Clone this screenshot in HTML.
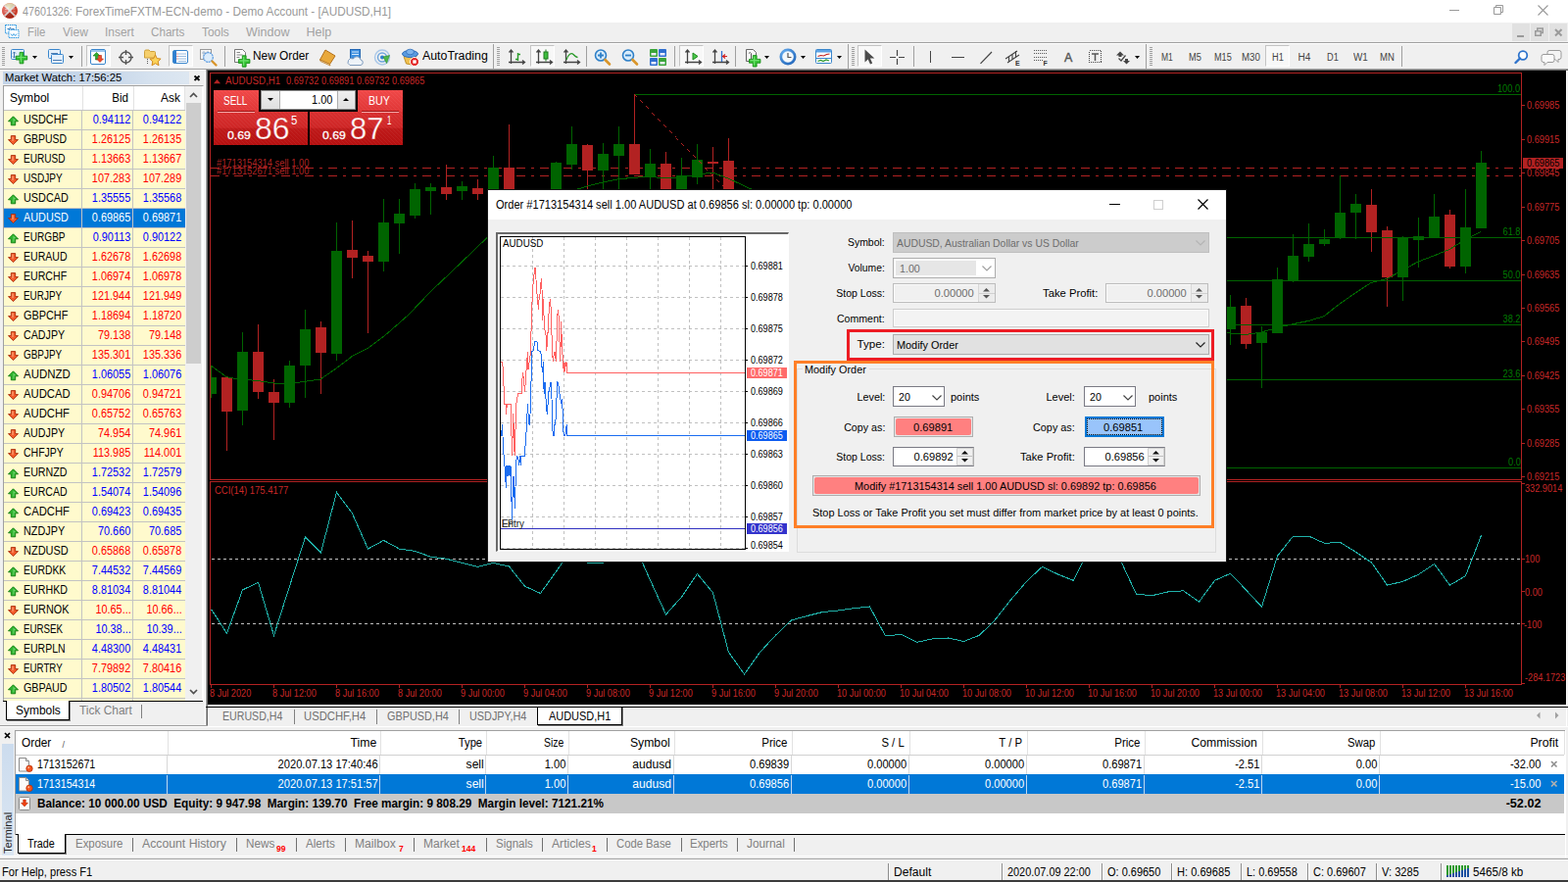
<!DOCTYPE html>
<html lang="en">
<head>
<meta charset="utf-8">
<title>47601326: ForexTimeFXTM-ECN-demo - Demo Account - [AUDUSD,H1]</title>
<style>
html,body{margin:0;padding:0}
body{width:1600px;height:900px;overflow:hidden;position:relative;background:#f0f0f0;font-family:"Liberation Sans",sans-serif;font-size:12px;color:#000}
.b{position:absolute;display:block}
.t{position:absolute;display:block;white-space:pre;line-height:20px;transform-origin:0 50%}
.tr{transform-origin:100% 50%}
.tc{transform-origin:50% 50%}
.sf{font-family:"Liberation Serif",serif}
section{position:absolute;left:0;top:0;width:0;height:0}
</style>
</head>
<body>
<section id="titlebar">
<div class="b" style="left:0px;top:0px;width:1600px;height:23px;background:#fff;"></div>
<svg class="b" style="left:2px;top:3px" width="16" height="16" viewBox="0 0 16 16"><defs><clipPath id="ci"><circle cx="8" cy="8" r="7.800"/></clipPath><radialGradient id="gi" cx=".4" cy=".3" r=".8"><stop offset="0" stop-color="#fff" stop-opacity=".35"/><stop offset="1" stop-color="#000" stop-opacity=".12"/></radialGradient></defs><g clip-path="url(#ci)"><rect width="16" height="16" fill="#ef4a32"/><path d="M8 8L0 0v16z" fill="#f4564a"/><path d="M8 8L16 0v16z" fill="#e63c26"/><path d="M8 8L0 16h16z" fill="#b8200e"/><path d="M8 8L1 0h14z" fill="#ecdfae"/><path d="M0 0l16 16M16 0L0 16" stroke="#f1eeee" stroke-width="1.600"/><path d="M3 6.500h2M2.500 9h2.500M11 6h2.500M11.500 9h2" stroke="#ffc0b8" stroke-width=".8"/><rect width="16" height="16" fill="url(#gi)"/></g></svg>
<span class="t" style="top:2px;font-size:12.5px;color:#999;left:22.7px;transform:scaleX(0.860);">47601326:</span>
<span class="t" style="top:2px;font-size:12.5px;color:#999;left:77px;transform:scaleX(0.942);">ForexTimeFXTM-ECN-demo - Demo Account - [AUDUSD,H1]</span>
<div class="b" style="left:1479px;top:10px;width:10px;height:1px;background:#999;"></div>
<svg class="b" style="left:1524px;top:5px" width="10" height="10" viewBox="0 0 10 10"><path d="M.5 2.5h7v7h-7zM2.5 2.5v-2h7v7h-2" fill="none" stroke="#999" stroke-width="1"/></svg>
<svg class="b" style="left:1569px;top:5px" width="11" height="11" viewBox="0 0 11 11"><path d="M.5 .5l10 10M10.500 .5l-10 10" fill="none" stroke="#999" stroke-width="1.1"/></svg>
</section>
<section id="menubar">
<div class="b" style="left:0px;top:23px;width:1600px;height:20px;background:#f0f0f0;"></div>
<svg class="b" style="left:5px;top:25px" width="15" height="15" viewBox="0 0 15 15"><rect x=".5" y=".5" width="11" height="8.500" fill="#f4f9fd" stroke="#2a96e0" stroke-width="1" stroke-dasharray="1.500 .7"/><path d="M2.500 4.500h2l1-1.500 1 2.500 1-1h2" fill="none" stroke="#2a6fb0" stroke-width=".9"/><rect x="4" y="5.500" width="10" height="8" fill="#fff" stroke="#2a96e0" stroke-dasharray="1.500 .7"/><path d="M6 9.500l1.500 2 1.500-2 1.500 2 1.500-2" fill="none" stroke="#2a96e0" stroke-width=".9"/></svg>
<span class="t" style="top:23px;font-size:12.5px;color:#a2a2a2;left:28px;transform:scaleX(0.909);">File</span>
<span class="t" style="top:23px;font-size:12.5px;color:#a2a2a2;left:63.5px;transform:scaleX(0.960);">View</span>
<span class="t" style="top:23px;font-size:12.5px;color:#a2a2a2;left:106.5px;transform:scaleX(0.953);">Insert</span>
<span class="t" style="top:23px;font-size:12.5px;color:#a2a2a2;left:154px;transform:scaleX(0.932);">Charts</span>
<span class="t" style="top:23px;font-size:12.5px;color:#a2a2a2;left:205.5px;transform:scaleX(0.953);">Tools</span>
<span class="t" style="top:23px;font-size:12.5px;color:#a2a2a2;left:251px;">Window</span>
<span class="t" style="top:23px;font-size:12.5px;color:#a2a2a2;left:312.5px;">Help</span>
<div class="b" style="left:1543px;top:24px;width:18px;height:18px;background:#e1e1e1;"></div>
<div class="b" style="left:1562px;top:24px;width:18px;height:18px;background:#e1e1e1;"></div>
<div class="b" style="left:1581px;top:24px;width:18px;height:18px;background:#e1e1e1;"></div>
<div class="b" style="left:1548px;top:36px;width:7px;height:2px;background:#9a9a9a;"></div>
<svg class="b" style="left:1566px;top:28px" width="10" height="10" viewBox="0 0 10 10"><path d="M.75 3.750h5.500v4.500h-5.500zM2.750 3.500v-2.500h5.500v4.500h-2" fill="none" stroke="#9a9a9a" stroke-width="1.500"/></svg>
<svg class="b" style="left:1586px;top:29px" width="9" height="9" viewBox="0 0 9 9"><path d="M1 1l6.500 6.500M7.500 1l-6.500 6.500" fill="none" stroke="#9a9a9a" stroke-width="2"/></svg>
</section>
<section id="toolbar">
<div class="b" style="left:0px;top:43px;width:1600px;height:1px;background:#a0a0a0;"></div>
<div class="b" style="left:0px;top:44px;width:1600px;height:1px;background:#fff;"></div>
<div class="b" style="left:0px;top:45px;width:1600px;height:25px;background:#f0f0f0;"></div>
<div class="b" style="left:0px;top:70px;width:1600px;height:1px;background:#a0a0a0;"></div>
<div class="b" style="left:0px;top:71px;width:210px;height:1px;background:#fff;"></div>
<div class="b" style="left:210px;top:71px;width:1px;height:1px;background:#a0a0a0;"></div>
<div class="b" style="left:211px;top:71px;width:1389px;height:1px;background:#696969;"></div>
<div class="b" style="left:0px;top:72px;width:212px;height:1px;background:#f0f0f0;"></div>
<div class="b" style="left:2px;top:48px;width:3px;height:20px;background:repeating-linear-gradient(#a0a0a0 0 1px,transparent 1px 2px);"></div>
<svg class="b" style="left:10px;top:49px" width="20" height="20" viewBox="0 0 20 20"><rect x="1.500" y="1.500" width="13" height="10" rx="1" fill="#e4f0fb" stroke="#3a86cc"/><path d="M4.500 4v6M3 5.500l1.500-1.500 1.500 1.500M3 8.500l1.500 1.500 1.500-1.500" fill="none" stroke="#3a6ea8" stroke-width=".9"/><path d="M6.3 8.2h3.800v-3.800h3.800v3.800h3.800v3.800h-3.800v3.800h-3.800v-3.800h-3.800z" fill="#35c435" stroke="#189018" stroke-width=".9"/><path d="M7.5 9.5h9M11.4 5.6v9" stroke="#7be87b" stroke-width="1.200" opacity=".8"/></svg>
<svg class="b" style="left:33px;top:57px" width="5" height="3" viewBox="0 0 5 3"><path d="M0 0h5L2.500 3z" fill="#000"/></svg>
<svg class="b" style="left:48px;top:49px" width="20" height="20" viewBox="0 0 20 20"><rect x="1.500" y="1.500" width="12" height="9" rx="1" fill="#e4f0fb" stroke="#3a86cc"/><rect x="4.500" y="6.500" width="12" height="9" rx="1" fill="#e4f0fb" stroke="#3a86cc"/><path d="M4 5.500h7M6 12.500h9" stroke="#3a6ea8" stroke-width=".9"/></svg>
<svg class="b" style="left:70px;top:57px" width="5" height="3" viewBox="0 0 5 3"><path d="M0 0h5L2.500 3z" fill="#000"/></svg>
<div class="b" style="left:83px;top:47px;width:1px;height:21px;background:#a0a0a0;"></div>
<div class="b" style="left:88px;top:46px;width:25px;height:22px;background:#f8f8f8;border:1px solid #c4c4c4;border-right-color:#fff;border-bottom-color:#fff;box-sizing:border-box;"></div>
<svg class="b" style="left:92px;top:50px" width="16" height="16" viewBox="0 0 16 16"><rect x=".5" y=".5" width="15" height="15" rx="1.500" fill="#fff" stroke="#3a86cc"/><rect x="1" y="1" width="14" height="2" fill="#9cc6ee"/><path d="M5.500 11v-4h-2.500l3.500-3.500 3.500 3.500h-2.500v4z" fill="#2fae2f" stroke="#137a13" stroke-width=".6"/><path d="M8.500 6.500h3v3.500h2l-3.500 3.500-3.500-3.500h2z" fill="#f04a2a" stroke="#b0240c" stroke-width=".6"/></svg>
<svg class="b" style="left:119px;top:49px" width="19" height="19" viewBox="0 0 19 19"><circle cx="9.500" cy="9.500" r="5.500" fill="none" stroke="#555" stroke-width="1.400"/><path d="M9.500 2v5M9.500 12v5M2 9.500h5M12 9.500h5" stroke="#555" stroke-width="1.400"/></svg>
<svg class="b" style="left:147px;top:49px" width="19" height="19" viewBox="0 0 19 19"><path d="M.5 3.500q0-1.500 1.500-1.500h3l1.500 1.500h4q1 0 1 1v5.500h-11z" fill="#f6cf6c" stroke="#c99a2e" stroke-width=".9"/><path d="M3.500 11v6" stroke="#555" stroke-dasharray="1 1"/><path d="M11.500 7l1.700 3.600 3.900.5-2.900 2.700.8 3.900-3.500-2-3.500 2 .8-3.900-2.900-2.700 3.900-.5z" fill="#fbd35a" stroke="#d28a1c" stroke-width="1"/></svg>
<div class="b" style="left:172px;top:46px;width:25px;height:22px;background:#f8f8f8;border:1px solid #c4c4c4;border-right-color:#fff;border-bottom-color:#fff;box-sizing:border-box;"></div>
<svg class="b" style="left:176px;top:50px" width="16" height="16" viewBox="0 0 16 16"><rect x=".5" y="1.500" width="15" height="13" rx="1.500" fill="#fff" stroke="#3a86cc"/><rect x="1" y="2" width="3" height="12" fill="#2f7fd0"/><path d="M6 5h8M6 7.500h8M6 10h8M6 12.500h8" stroke="#8db4dc" stroke-width=".9"/><path d="M4.500 5h1M4.500 7.500h1M4.500 10h1" stroke="#c33" stroke-width="1"/></svg>
<svg class="b" style="left:203px;top:49px" width="20" height="20" viewBox="0 0 20 20"><rect x="1.500" y="1.500" width="11" height="10" fill="#f4f4f4" stroke="#999"/><path d="M3 5h8M5 3v6M9 3v6" stroke="#8aa8c8" stroke-width=".8"/><circle cx="9.500" cy="9.500" r="4.800" fill="#dcecfa" stroke="#5b9be0" stroke-width="1.200" stroke-dasharray="2 .6"/><path d="M13.500 13.500l4 4" stroke="#d9952a" stroke-width="2.400" stroke-linecap="round"/></svg>
<div class="b" style="left:229px;top:47px;width:1px;height:21px;background:#a0a0a0;"></div>
<svg class="b" style="left:238px;top:49px" width="20" height="20" viewBox="0 0 20 20"><path d="M1.500 1.500h8l3 3v10h-11z" fill="#fafafa" stroke="#777"/><path d="M3.500 4.500h3.500M3.500 7h6M3.500 9.500h3" stroke="#888" stroke-width="1"/><path d="M5.5 11.6h3.800v-3.800h3.800v3.800h3.800v3.800h-3.800v3.800h-3.800v-3.800h-3.800z" fill="#35c435" stroke="#189018" stroke-width=".9"/><path d="M6.7 12.9h9M10.6 9v9" stroke="#7be87b" stroke-width="1.200" opacity=".8"/></svg>
<span class="t" style="top:47px;font-size:12.5px;left:258px;transform:scaleX(0.948);">New Order</span>
<svg class="b" style="left:325px;top:49px" width="19" height="19" viewBox="0 0 19 19"><path d="M7 2l10 6-5.500 8.500-10-4.500z" fill="#e9a93c" stroke="#b3701a" stroke-width="1"/><path d="M1.500 12l10 4.500.5 1.500-10-4.500z" fill="#f7e2b0" stroke="#b3701a" stroke-width=".7"/></svg>
<svg class="b" style="left:353px;top:49px" width="20" height="20" viewBox="0 0 20 20"><rect x="4.500" y="1.500" width="10" height="9" fill="#3c8fe0" stroke="#2468b4"/><path d="M6 4h7M6 6.500h7" stroke="#d6e9fb" stroke-width="1"/><path d="M4 17.500h11a2.800 2.800 0 0 0 0-5.500 4 4 0 0 0-7.500-1 3.300 3.300 0 0 0-3.500 6.500z" fill="#eef3f8" stroke="#7f9bbd" stroke-width="1"/></svg>
<svg class="b" style="left:381px;top:49px" width="19" height="19" viewBox="0 0 19 19"><circle cx="9" cy="9.500" r="7.500" fill="none" stroke="#a9c7e8" stroke-width="1.400"/><circle cx="9" cy="9.500" r="4.500" fill="none" stroke="#6ea5dc" stroke-width="1.400"/><circle cx="9" cy="9.500" r="2" fill="#2f7fd0"/><path d="M10 9l3.500 6.500 3-8z" fill="#4cb84c" stroke="#2a8a2a" stroke-width=".6"/></svg>
<svg class="b" style="left:409px;top:48px" width="20" height="20" viewBox="0 0 20 20"><path d="M3 9.500l13 0-4.500 8.500-6-1z" fill="#f0c050" stroke="#b98a20" stroke-width=".9"/><ellipse cx="9.500" cy="7" rx="8" ry="3.500" fill="#5a9be0" stroke="#2e6cb8"/><ellipse cx="9.500" cy="5" rx="4" ry="2.800" fill="#7fb4ec" stroke="#2e6cb8" stroke-width=".8"/><circle cx="14" cy="15" r="4.500" fill="#e32424" stroke="#fff" stroke-width="1"/><rect x="12.300" y="13.300" width="3.400" height="3.400" fill="#fff"/></svg>
<span class="t" style="top:47px;font-size:12.5px;left:430.5px;transform:scaleX(0.988);">AutoTrading</span>
<div class="b" style="left:503px;top:45px;width:1px;height:25px;background:#a0a0a0;"></div>
<div class="b" style="left:507px;top:48px;width:3px;height:20px;background:repeating-linear-gradient(#a0a0a0 0 1px,transparent 1px 2px);"></div>
<svg class="b" style="left:518px;top:49px" width="19" height="19" viewBox="0 0 19 19"><path d="M3.5 2v14M1.5 4.5l2-2.5 2 2.5M1 14.5h16M15 12.5l2.5 2-2.5 2" fill="none" stroke="#444" stroke-width="1.3"/><path d="M10.500 5v8M10.500 6.500h2.500M8 11.500h2.500" fill="none" stroke="#2a9a2a" stroke-width="1.400"/></svg>
<div class="b" style="left:541px;top:46px;width:25px;height:22px;background:#f8f8f8;border:1px solid #c4c4c4;border-right-color:#fff;border-bottom-color:#fff;box-sizing:border-box;"></div>
<svg class="b" style="left:546px;top:49px" width="19" height="19" viewBox="0 0 19 19"><path d="M3.5 2v14M1.5 4.5l2-2.5 2 2.5M1 14.5h16M15 12.5l2.5 2-2.5 2" fill="none" stroke="#444" stroke-width="1.3"/><path d="M11 1.500v12" stroke="#1d7a1d" stroke-width="1"/><rect x="9" y="4" width="4" height="7" fill="#3fbf3f" stroke="#1d7a1d" stroke-width="1"/></svg>
<svg class="b" style="left:574px;top:49px" width="19" height="19" viewBox="0 0 19 19"><path d="M3.5 2v14M1.5 4.5l2-2.5 2 2.5M1 14.5h16M15 12.5l2.5 2-2.5 2" fill="none" stroke="#444" stroke-width="1.3"/><path d="M4 12c2-6 5-7.500 7-5.500s3 3 4.500 3" fill="none" stroke="#2a9a2a" stroke-width="1.300"/></svg>
<div class="b" style="left:598px;top:47px;width:1px;height:21px;background:#a0a0a0;"></div>
<svg class="b" style="left:605px;top:49px" width="20" height="20" viewBox="0 0 20 20"><circle cx="8" cy="7.5" r="5.500" fill="#d8ecfb" stroke="#2f80c8" stroke-width="1.600"/><path d="M12.5 12.0l4.500 4.500" stroke="#d9952a" stroke-width="2.600" stroke-linecap="round"/><path d="M5 7.5h6M8 4.5v6" stroke="#2f80c8" stroke-width="1.800"/></svg>
<svg class="b" style="left:633px;top:49px" width="20" height="20" viewBox="0 0 20 20"><circle cx="8" cy="7.5" r="5.500" fill="#d8ecfb" stroke="#2f80c8" stroke-width="1.600"/><path d="M12.5 12.0l4.500 4.500" stroke="#d9952a" stroke-width="2.600" stroke-linecap="round"/><path d="M5 7.5h6" stroke="#2f80c8" stroke-width="1.800"/></svg>
<svg class="b" style="left:663px;top:50px" width="17" height="17" viewBox="0 0 17 17"><rect x="0" y="0" width="8" height="8" rx="1" fill="#3aa53a"/><rect x="9" y="0" width="8" height="8" rx="1" fill="#2f6fd0"/><rect x="0" y="9" width="8" height="8" rx="1" fill="#2f6fd0"/><rect x="9" y="9" width="8" height="8" rx="1" fill="#3aa53a"/><path d="M1.500 4h5v2.500h-5zM10.500 4h5v2.500h-5zM1.500 13h5v2.500h-5zM10.500 13h5v2.500h-5z" fill="#eef"/></svg>
<div class="b" style="left:688px;top:47px;width:1px;height:21px;background:#a0a0a0;"></div>
<div class="b" style="left:693px;top:46px;width:25px;height:22px;background:#f8f8f8;border:1px solid #c4c4c4;border-right-color:#fff;border-bottom-color:#fff;box-sizing:border-box;"></div>
<svg class="b" style="left:698px;top:49px" width="19" height="19" viewBox="0 0 19 19"><path d="M3.5 2v14M1.5 4.5l2-2.5 2 2.5M1 14.5h16M15 12.5l2.5 2-2.5 2" fill="none" stroke="#444" stroke-width="1.3"/><path d="M9 5l5 3.500-5 3.500z" fill="#4cc84c" stroke="#1d8a1d" stroke-width="1"/></svg>
<svg class="b" style="left:726px;top:49px" width="19" height="19" viewBox="0 0 19 19"><path d="M3.5 2v14M1.5 4.5l2-2.5 2 2.5M1 14.5h16M15 12.5l2.5 2-2.5 2" fill="none" stroke="#444" stroke-width="1.3"/><path d="M10.500 3v11" stroke="#2f6fd0" stroke-width="1.300"/><path d="M16 8.500h-4M14 6.500l-2.500 2 2.500 2" fill="none" stroke="#d02020" stroke-width="1.200"/></svg>
<div class="b" style="left:750px;top:47px;width:1px;height:21px;background:#a0a0a0;"></div>
<svg class="b" style="left:759px;top:49px" width="20" height="20" viewBox="0 0 20 20"><path d="M2.500 1.500h7l3 3v9h-10z" fill="#fafafa" stroke="#666"/><path d="M5 5.500q1.500-2 2.500 0v6" fill="none" stroke="#555" stroke-width="1"/><path d="M5.5 11.4h3.800v-3.800h3.800v3.800h3.800v3.800h-3.800v3.800h-3.800v-3.800h-3.800z" fill="#35c435" stroke="#189018" stroke-width=".9"/><path d="M6.7 12.7h9M10.6 8.8v9" stroke="#7be87b" stroke-width="1.200" opacity=".8"/></svg>
<svg class="b" style="left:780px;top:57px" width="5" height="3" viewBox="0 0 5 3"><path d="M0 0h5L2.500 3z" fill="#000"/></svg>
<svg class="b" style="left:795px;top:49px" width="18" height="18" viewBox="0 0 18 18"><defs><radialGradient id="gc" cx=".35" cy=".3" r=".9"><stop offset="0" stop-color="#6db4f4"/><stop offset="1" stop-color="#1458b0"/></radialGradient></defs><circle cx="9" cy="9" r="8.500" fill="url(#gc)"/><circle cx="9" cy="9" r="5.800" fill="#f4f8fc"/><path d="M9 5v4.500h3.500" fill="none" stroke="#555" stroke-width="1.200"/></svg>
<svg class="b" style="left:817px;top:57px" width="5" height="3" viewBox="0 0 5 3"><path d="M0 0h5L2.500 3z" fill="#000"/></svg>
<svg class="b" style="left:832px;top:50px" width="17" height="15" viewBox="0 0 17 15"><rect x=".5" y=".5" width="16" height="14" rx="1" fill="#fff" stroke="#3a86cc"/><rect x="1" y="1" width="15" height="2.500" fill="#5ea4e6"/><path d="M2.500 7.500l3-1 3 .5 3-1.500 3-.5" fill="none" stroke="#c02020" stroke-width="1.200"/><path d="M1 9.500h15" stroke="#3a86cc"/><path d="M2.500 12.500l3-1 2.500 1 3-1.500 3 1" fill="none" stroke="#2a9a2a" stroke-width="1.200"/></svg>
<svg class="b" style="left:854px;top:57px" width="5" height="3" viewBox="0 0 5 3"><path d="M0 0h5L2.500 3z" fill="#000"/></svg>
<div class="b" style="left:865px;top:45px;width:1px;height:25px;background:#a0a0a0;"></div>
<div class="b" style="left:869px;top:48px;width:3px;height:20px;background:repeating-linear-gradient(#a0a0a0 0 1px,transparent 1px 2px);"></div>
<div class="b" style="left:875px;top:46px;width:25px;height:22px;background:#f8f8f8;border:1px solid #c4c4c4;border-right-color:#fff;border-bottom-color:#fff;box-sizing:border-box;"></div>
<svg class="b" style="left:881px;top:50px" width="13" height="17" viewBox="0 0 13 17"><path d="M1.500 .5v13l3.200-3 2.300 5 2.200-1-2.300-5h4.400z" fill="#4a4a4a"/></svg>
<svg class="b" style="left:908px;top:51px" width="15" height="15" viewBox="0 0 15 15"><path d="M7.500 0v6M7.500 9v6M0 7.500h6M9 7.500h6" stroke="#444" stroke-width="1.200"/></svg>
<div class="b" style="left:932px;top:47px;width:1px;height:21px;background:#a0a0a0;"></div>
<div class="b" style="left:949px;top:52px;width:1px;height:12px;background:#444;"></div>
<div class="b" style="left:971px;top:58px;width:13px;height:1px;background:#444;"></div>
<svg class="b" style="left:998px;top:51px" width="15" height="15" viewBox="0 0 15 15"><path d="M2.500 13.800l11.500-11.800" stroke="#444" stroke-width="1.200"/></svg>
<svg class="b" style="left:1025px;top:49px" width="20" height="20" viewBox="0 0 20 20"><path d="M1 11l12-8M3 15l12-8M4.500 14.500v-6M8 12v-6M11.500 10v-7" fill="none" stroke="#444" stroke-width="1.100"/></svg>
<span class="t" style="top:55px;font-size:7px;color:#333;font-weight:bold;left:1036px;">E</span>
<svg class="b" style="left:1055px;top:50px" width="16" height="14" viewBox="0 0 16 14"><path d="M0 1.500h14M0 4.500h14M0 8.500h14M0 11.500h10" stroke="#555" stroke-width="1" stroke-dasharray="1 1" shape-rendering="crispEdges"/></svg>
<span class="t" style="top:55px;font-size:7px;color:#333;font-weight:bold;left:1064.5px;">F</span>
<span class="t" style="top:49px;font-size:12.5px;color:#555;left:1085.5px;transform:scaleX(0.995);-webkit-text-stroke:.4px #555;">A</span>
<svg class="b" style="left:1110px;top:50px" width="15" height="15" viewBox="0 0 15 15"><rect x="1.500" y="1.500" width="12" height="12" fill="none" stroke="#444" stroke-dasharray="1 1" shape-rendering="crispEdges"/><path d="M4 5h7M7.500 5v7" stroke="#555" stroke-width="1.500"/></svg>
<svg class="b" style="left:1138px;top:51px" width="16" height="16" viewBox="0 0 16 16"><path d="M1 5.500l4-4 4 4z" fill="#444"/><path d="M3.500 5h3v2h-3z" fill="#444"/><path d="M8 11l3.500 3.500 3.500-3.500z" fill="#444"/><path d="M10 9h3v2h-3z" fill="#444"/><path d="M3.500 8.500l2.500 2.500 4.500-5.500" fill="none" stroke="#444" stroke-width="1.200"/></svg>
<svg class="b" style="left:1158px;top:57px" width="5" height="3" viewBox="0 0 5 3"><path d="M0 0h5L2.500 3z" fill="#000"/></svg>
<div class="b" style="left:1169px;top:45px;width:1px;height:25px;background:#a0a0a0;"></div>
<div class="b" style="left:1173px;top:48px;width:3px;height:20px;background:repeating-linear-gradient(#a0a0a0 0 1px,transparent 1px 2px);"></div>
<div class="b" style="left:1291px;top:46px;width:25px;height:22px;background:#f8f8f8;border:1px solid #c4c4c4;border-right-color:#fff;border-bottom-color:#fff;box-sizing:border-box;"></div>
<span class="t" style="top:49px;font-size:10px;color:#444;left:1184.5px;transform:scaleX(0.849);">M1</span>
<span class="t" style="top:49px;font-size:10px;color:#444;left:1212.5px;transform:scaleX(0.921);">M5</span>
<span class="t" style="top:49px;font-size:10px;color:#444;left:1238.5px;transform:scaleX(0.915);">M15</span>
<span class="t" style="top:49px;font-size:10px;color:#444;left:1266.5px;transform:scaleX(0.966);">M30</span>
<span class="t" style="top:49px;font-size:10px;color:#444;left:1297.5px;transform:scaleX(0.923);">H1</span>
<span class="t" style="top:49px;font-size:10px;color:#444;left:1324.5px;">H4</span>
<span class="t" style="top:49px;font-size:10px;color:#444;left:1353.5px;transform:scaleX(0.923);">D1</span>
<span class="t" style="top:49px;font-size:10px;color:#444;left:1380.5px;transform:scaleX(0.987);">W1</span>
<span class="t" style="top:49px;font-size:10px;color:#444;left:1407.5px;transform:scaleX(0.952);">MN</span>
<div class="b" style="left:1430px;top:47px;width:1px;height:21px;background:#a0a0a0;"></div>
<svg class="b" style="left:1545px;top:51px" width="15" height="15" viewBox="0 0 15 15"><circle cx="9" cy="5.500" r="4.300" fill="#fff" stroke="#2f74cc" stroke-width="1.800"/><path d="M6 8.500l-4.500 4.500" stroke="#2f74cc" stroke-width="2.400" stroke-linecap="round"/></svg>
<svg class="b" style="left:1572px;top:50px" width="22" height="18" viewBox="0 0 22 18"><path d="M9 1.500h10q2 0 2 2v5q0 2-2 2h-1v3l-3-3h-6q-2 0-2-2v-5q0-2 2-2z" fill="#f4f4f4" stroke="#9a9a9a"/><path d="M3 5.500h9q2 0 2 2v4q0 2-2 2h-5l-3 3v-3h-1q-2 0-2-2v-4q0-2 2-2z" fill="#fafafa" stroke="#9a9a9a"/></svg>
</section>
<section id="market-watch">
<div class="b" style="left:0px;top:73px;width:211px;height:668px;background:#f0f0f0;"></div>
<div class="b" style="left:3px;top:73px;width:190px;height:13px;background:linear-gradient(90deg,#c3d4e8 0,#c6d6e9 55%,#d6e2ef 80%,#dde7f1 100%);"></div>
<span class="t" style="top:69px;font-size:11px;left:5px;transform:scaleX(1.025);">Market Watch: 17:56:25</span>
<svg class="b" style="left:197px;top:76px" width="8" height="8" viewBox="0 0 8 8"><path d="M1.500 1.500l5 4.500M6.500 1.500l-5 4.500" stroke="#000" stroke-width="1.800"/></svg>
<div class="b" style="left:209px;top:73px;width:1px;height:668px;background:#fff;"></div>
<div class="b" style="left:210px;top:72px;width:1px;height:669px;background:#a0a0a0;"></div>
<div class="b" style="left:211px;top:72px;width:1px;height:669px;background:#696969;"></div>
<div class="b" style="left:3px;top:87px;width:205px;height:628px;background:#fff;border:1px solid #a0a0a0;border-right-color:#fff;border-bottom:none;box-sizing:border-box;"></div>
<div class="b" style="left:84px;top:88px;width:1px;height:24px;background:#e2e2e2;"></div>
<div class="b" style="left:136px;top:88px;width:1px;height:24px;background:#e2e2e2;"></div>
<div class="b" style="left:188px;top:88px;width:1px;height:24px;background:#e2e2e2;"></div>
<span class="t" style="top:90px;font-size:12.5px;left:9.5px;transform:scaleX(0.967);">Symbol</span>
<span class="t tr" style="top:90px;font-size:12.5px;left:112.93px;transform:scaleX(0.930);">Bid</span>
<span class="t tr" style="top:90px;font-size:12.5px;left:162.66px;transform:scaleX(0.950);">Ask</span>
<div class="b" style="left:4px;top:113px;width:185px;height:19px;background:#fffacd;"></div>
<svg class="b" style="left:8px;top:118px" width="11" height="11" viewBox="0 0 11 11"><path d="M5.500 .8l5 5h-2.800v4h-4.400v-4h-2.800z" fill="#2fb52f" stroke="#0f7a0f" stroke-width=".9"/><path d="M5.500 2.500l2.500 2.600h-1.500v3.500h-1z" fill="#8fe08f" opacity=".7"/></svg>
<span class="t" style="top:112px;font-size:12.5px;left:24.2px;transform:scaleX(0.866);">USDCHF</span>
<span class="t tr" style="top:112px;font-size:12.5px;color:#0000ff;left:88.94px;transform:scaleX(0.870);">0.94112</span>
<span class="t tr" style="top:112px;font-size:12.5px;color:#0000ff;left:140.21px;transform:scaleX(0.870);">0.94122</span>
<div class="b" style="left:4px;top:133px;width:185px;height:19px;background:#fffacd;"></div>
<svg class="b" style="left:8px;top:138px" width="11" height="11" viewBox="0 0 11 11"><path d="M3.300 .6h4.400v4h2.800l-5 5-5-5h2.800z" fill="#f25a2a" stroke="#a82a08" stroke-width=".9"/><path d="M4.300 1.500h1.400v4.500h-1.400z" fill="#ffb48a" opacity=".7"/></svg>
<span class="t" style="top:132px;font-size:12.5px;left:24.2px;transform:scaleX(0.835);">GBPUSD</span>
<span class="t tr" style="top:132px;font-size:12.5px;color:#ff0000;left:88.01px;transform:scaleX(0.870);">1.26125</span>
<span class="t tr" style="top:132px;font-size:12.5px;color:#ff0000;left:140.21px;transform:scaleX(0.870);">1.26135</span>
<div class="b" style="left:4px;top:153px;width:185px;height:19px;background:#fffacd;"></div>
<svg class="b" style="left:8px;top:158px" width="11" height="11" viewBox="0 0 11 11"><path d="M3.300 .6h4.400v4h2.800l-5 5-5-5h2.800z" fill="#f25a2a" stroke="#a82a08" stroke-width=".9"/><path d="M4.300 1.500h1.400v4.500h-1.400z" fill="#ffb48a" opacity=".7"/></svg>
<span class="t" style="top:152px;font-size:12.5px;left:24.2px;transform:scaleX(0.807);">EURUSD</span>
<span class="t tr" style="top:152px;font-size:12.5px;color:#ff0000;left:88.01px;transform:scaleX(0.870);">1.13663</span>
<span class="t tr" style="top:152px;font-size:12.5px;color:#ff0000;left:140.21px;transform:scaleX(0.870);">1.13667</span>
<div class="b" style="left:4px;top:173px;width:185px;height:19px;background:#fffacd;"></div>
<svg class="b" style="left:8px;top:178px" width="11" height="11" viewBox="0 0 11 11"><path d="M3.300 .6h4.400v4h2.800l-5 5-5-5h2.800z" fill="#f25a2a" stroke="#a82a08" stroke-width=".9"/><path d="M4.300 1.500h1.400v4.500h-1.400z" fill="#ffb48a" opacity=".7"/></svg>
<span class="t" style="top:172px;font-size:12.5px;left:24.2px;transform:scaleX(0.805);">USDJPY</span>
<span class="t tr" style="top:172px;font-size:12.5px;color:#ff0000;left:88.01px;transform:scaleX(0.870);">107.283</span>
<span class="t tr" style="top:172px;font-size:12.5px;color:#ff0000;left:140.21px;transform:scaleX(0.870);">107.289</span>
<div class="b" style="left:4px;top:193px;width:185px;height:19px;background:#fffacd;"></div>
<svg class="b" style="left:8px;top:198px" width="11" height="11" viewBox="0 0 11 11"><path d="M5.500 .8l5 5h-2.800v4h-4.400v-4h-2.800z" fill="#2fb52f" stroke="#0f7a0f" stroke-width=".9"/><path d="M5.500 2.500l2.500 2.600h-1.500v3.500h-1z" fill="#8fe08f" opacity=".7"/></svg>
<span class="t" style="top:192px;font-size:12.5px;left:24.2px;transform:scaleX(0.868);">USDCAD</span>
<span class="t tr" style="top:192px;font-size:12.5px;color:#0000ff;left:88.01px;transform:scaleX(0.870);">1.35555</span>
<span class="t tr" style="top:192px;font-size:12.5px;color:#0000ff;left:140.21px;transform:scaleX(0.870);">1.35568</span>
<div class="b" style="left:4px;top:213px;width:185px;height:19px;background:#0078d7;"></div>
<svg class="b" style="left:8px;top:218px" width="11" height="11" viewBox="0 0 11 11"><path d="M3.300 .6h4.400v4h2.800l-5 5-5-5h2.800z" fill="#f25a2a" stroke="#a82a08" stroke-width=".9"/><path d="M4.300 1.500h1.400v4.500h-1.400z" fill="#ffb48a" opacity=".7"/></svg>
<span class="t" style="top:212px;font-size:12.5px;color:#fff;left:24.2px;transform:scaleX(0.868);">AUDUSD</span>
<span class="t tr" style="top:212px;font-size:12.5px;color:#fff;left:88.01px;transform:scaleX(0.870);">0.69865</span>
<span class="t tr" style="top:212px;font-size:12.5px;color:#fff;left:140.21px;transform:scaleX(0.870);">0.69871</span>
<div class="b" style="left:4px;top:233px;width:185px;height:19px;background:#fffacd;"></div>
<svg class="b" style="left:8px;top:238px" width="11" height="11" viewBox="0 0 11 11"><path d="M5.500 .8l5 5h-2.800v4h-4.400v-4h-2.800z" fill="#2fb52f" stroke="#0f7a0f" stroke-width=".9"/><path d="M5.500 2.500l2.500 2.600h-1.500v3.500h-1z" fill="#8fe08f" opacity=".7"/></svg>
<span class="t" style="top:232px;font-size:12.5px;left:24.2px;transform:scaleX(0.807);">EURGBP</span>
<span class="t tr" style="top:232px;font-size:12.5px;color:#0000ff;left:88.94px;transform:scaleX(0.870);">0.90113</span>
<span class="t tr" style="top:232px;font-size:12.5px;color:#0000ff;left:140.21px;transform:scaleX(0.870);">0.90122</span>
<div class="b" style="left:4px;top:253px;width:185px;height:19px;background:#fffacd;"></div>
<svg class="b" style="left:8px;top:258px" width="11" height="11" viewBox="0 0 11 11"><path d="M3.300 .6h4.400v4h2.800l-5 5-5-5h2.800z" fill="#f25a2a" stroke="#a82a08" stroke-width=".9"/><path d="M4.300 1.500h1.400v4.500h-1.400z" fill="#ffb48a" opacity=".7"/></svg>
<span class="t" style="top:252px;font-size:12.5px;left:24.2px;transform:scaleX(0.845);">EURAUD</span>
<span class="t tr" style="top:252px;font-size:12.5px;color:#ff0000;left:88.01px;transform:scaleX(0.870);">1.62678</span>
<span class="t tr" style="top:252px;font-size:12.5px;color:#ff0000;left:140.21px;transform:scaleX(0.870);">1.62698</span>
<div class="b" style="left:4px;top:273px;width:185px;height:19px;background:#fffacd;"></div>
<svg class="b" style="left:8px;top:278px" width="11" height="11" viewBox="0 0 11 11"><path d="M3.300 .6h4.400v4h2.800l-5 5-5-5h2.800z" fill="#f25a2a" stroke="#a82a08" stroke-width=".9"/><path d="M4.300 1.500h1.400v4.500h-1.400z" fill="#ffb48a" opacity=".7"/></svg>
<span class="t" style="top:272px;font-size:12.5px;left:24.2px;transform:scaleX(0.847);">EURCHF</span>
<span class="t tr" style="top:272px;font-size:12.5px;color:#ff0000;left:88.01px;transform:scaleX(0.870);">1.06974</span>
<span class="t tr" style="top:272px;font-size:12.5px;color:#ff0000;left:140.21px;transform:scaleX(0.870);">1.06978</span>
<div class="b" style="left:4px;top:293px;width:185px;height:19px;background:#fffacd;"></div>
<svg class="b" style="left:8px;top:298px" width="11" height="11" viewBox="0 0 11 11"><path d="M3.300 .6h4.400v4h2.800l-5 5-5-5h2.800z" fill="#f25a2a" stroke="#a82a08" stroke-width=".9"/><path d="M4.300 1.500h1.400v4.500h-1.400z" fill="#ffb48a" opacity=".7"/></svg>
<span class="t" style="top:292px;font-size:12.5px;left:24.2px;transform:scaleX(0.793);">EURJPY</span>
<span class="t tr" style="top:292px;font-size:12.5px;color:#ff0000;left:88.01px;transform:scaleX(0.870);">121.944</span>
<span class="t tr" style="top:292px;font-size:12.5px;color:#ff0000;left:140.21px;transform:scaleX(0.870);">121.949</span>
<div class="b" style="left:4px;top:313px;width:185px;height:19px;background:#fffacd;"></div>
<svg class="b" style="left:8px;top:318px" width="11" height="11" viewBox="0 0 11 11"><path d="M3.300 .6h4.400v4h2.800l-5 5-5-5h2.800z" fill="#f25a2a" stroke="#a82a08" stroke-width=".9"/><path d="M4.300 1.500h1.400v4.500h-1.400z" fill="#ffb48a" opacity=".7"/></svg>
<span class="t" style="top:312px;font-size:12.5px;left:24.2px;transform:scaleX(0.870);">GBPCHF</span>
<span class="t tr" style="top:312px;font-size:12.5px;color:#ff0000;left:88.01px;transform:scaleX(0.870);">1.18694</span>
<span class="t tr" style="top:312px;font-size:12.5px;color:#ff0000;left:140.21px;transform:scaleX(0.870);">1.18720</span>
<div class="b" style="left:4px;top:333px;width:185px;height:19px;background:#fffacd;"></div>
<svg class="b" style="left:8px;top:338px" width="11" height="11" viewBox="0 0 11 11"><path d="M3.300 .6h4.400v4h2.800l-5 5-5-5h2.800z" fill="#f25a2a" stroke="#a82a08" stroke-width=".9"/><path d="M4.300 1.500h1.400v4.500h-1.400z" fill="#ffb48a" opacity=".7"/></svg>
<span class="t" style="top:332px;font-size:12.5px;left:24.2px;transform:scaleX(0.854);">CADJPY</span>
<span class="t tr" style="top:332px;font-size:12.5px;color:#ff0000;left:94.97px;transform:scaleX(0.870);">79.138</span>
<span class="t tr" style="top:332px;font-size:12.5px;color:#ff0000;left:147.17px;transform:scaleX(0.870);">79.148</span>
<div class="b" style="left:4px;top:353px;width:185px;height:19px;background:#fffacd;"></div>
<svg class="b" style="left:8px;top:358px" width="11" height="11" viewBox="0 0 11 11"><path d="M3.300 .6h4.400v4h2.800l-5 5-5-5h2.800z" fill="#f25a2a" stroke="#a82a08" stroke-width=".9"/><path d="M4.300 1.500h1.400v4.500h-1.400z" fill="#ffb48a" opacity=".7"/></svg>
<span class="t" style="top:352px;font-size:12.5px;left:24.2px;transform:scaleX(0.793);">GBPJPY</span>
<span class="t tr" style="top:352px;font-size:12.5px;color:#ff0000;left:88.01px;transform:scaleX(0.870);">135.301</span>
<span class="t tr" style="top:352px;font-size:12.5px;color:#ff0000;left:140.21px;transform:scaleX(0.870);">135.336</span>
<div class="b" style="left:4px;top:373px;width:185px;height:19px;background:#fffacd;"></div>
<svg class="b" style="left:8px;top:378px" width="11" height="11" viewBox="0 0 11 11"><path d="M5.500 .8l5 5h-2.800v4h-4.400v-4h-2.800z" fill="#2fb52f" stroke="#0f7a0f" stroke-width=".9"/><path d="M5.500 2.500l2.500 2.600h-1.500v3.500h-1z" fill="#8fe08f" opacity=".7"/></svg>
<span class="t" style="top:372px;font-size:12.5px;left:24.2px;transform:scaleX(0.916);">AUDNZD</span>
<span class="t tr" style="top:372px;font-size:12.5px;color:#0000ff;left:88.01px;transform:scaleX(0.870);">1.06055</span>
<span class="t tr" style="top:372px;font-size:12.5px;color:#0000ff;left:140.21px;transform:scaleX(0.870);">1.06076</span>
<div class="b" style="left:4px;top:393px;width:185px;height:19px;background:#fffacd;"></div>
<svg class="b" style="left:8px;top:398px" width="11" height="11" viewBox="0 0 11 11"><path d="M3.300 .6h4.400v4h2.800l-5 5-5-5h2.800z" fill="#f25a2a" stroke="#a82a08" stroke-width=".9"/><path d="M4.300 1.500h1.400v4.500h-1.400z" fill="#ffb48a" opacity=".7"/></svg>
<span class="t" style="top:392px;font-size:12.5px;left:24.2px;transform:scaleX(0.904);">AUDCAD</span>
<span class="t tr" style="top:392px;font-size:12.5px;color:#ff0000;left:88.01px;transform:scaleX(0.870);">0.94706</span>
<span class="t tr" style="top:392px;font-size:12.5px;color:#ff0000;left:140.21px;transform:scaleX(0.870);">0.94721</span>
<div class="b" style="left:4px;top:413px;width:185px;height:19px;background:#fffacd;"></div>
<svg class="b" style="left:8px;top:418px" width="11" height="11" viewBox="0 0 11 11"><path d="M3.300 .6h4.400v4h2.800l-5 5-5-5h2.800z" fill="#f25a2a" stroke="#a82a08" stroke-width=".9"/><path d="M4.300 1.500h1.400v4.500h-1.400z" fill="#ffb48a" opacity=".7"/></svg>
<span class="t" style="top:412px;font-size:12.5px;left:24.2px;transform:scaleX(0.902);">AUDCHF</span>
<span class="t tr" style="top:412px;font-size:12.5px;color:#ff0000;left:88.01px;transform:scaleX(0.870);">0.65752</span>
<span class="t tr" style="top:412px;font-size:12.5px;color:#ff0000;left:140.21px;transform:scaleX(0.870);">0.65763</span>
<div class="b" style="left:4px;top:433px;width:185px;height:19px;background:#fffacd;"></div>
<svg class="b" style="left:8px;top:438px" width="11" height="11" viewBox="0 0 11 11"><path d="M3.300 .6h4.400v4h2.800l-5 5-5-5h2.800z" fill="#f25a2a" stroke="#a82a08" stroke-width=".9"/><path d="M4.300 1.500h1.400v4.500h-1.400z" fill="#ffb48a" opacity=".7"/></svg>
<span class="t" style="top:432px;font-size:12.5px;left:24.2px;transform:scaleX(0.854);">AUDJPY</span>
<span class="t tr" style="top:432px;font-size:12.5px;color:#ff0000;left:94.97px;transform:scaleX(0.870);">74.954</span>
<span class="t tr" style="top:432px;font-size:12.5px;color:#ff0000;left:147.17px;transform:scaleX(0.870);">74.961</span>
<div class="b" style="left:4px;top:453px;width:185px;height:19px;background:#fffacd;"></div>
<svg class="b" style="left:8px;top:458px" width="11" height="11" viewBox="0 0 11 11"><path d="M3.300 .6h4.400v4h2.800l-5 5-5-5h2.800z" fill="#f25a2a" stroke="#a82a08" stroke-width=".9"/><path d="M4.300 1.500h1.400v4.500h-1.400z" fill="#ffb48a" opacity=".7"/></svg>
<span class="t" style="top:452px;font-size:12.5px;left:24.2px;transform:scaleX(0.841);">CHFJPY</span>
<span class="t tr" style="top:452px;font-size:12.5px;color:#ff0000;left:88.94px;transform:scaleX(0.870);">113.985</span>
<span class="t tr" style="top:452px;font-size:12.5px;color:#ff0000;left:141.14px;transform:scaleX(0.870);">114.001</span>
<div class="b" style="left:4px;top:473px;width:185px;height:19px;background:#fffacd;"></div>
<svg class="b" style="left:8px;top:478px" width="11" height="11" viewBox="0 0 11 11"><path d="M5.500 .8l5 5h-2.800v4h-4.400v-4h-2.800z" fill="#2fb52f" stroke="#0f7a0f" stroke-width=".9"/><path d="M5.500 2.500l2.500 2.600h-1.500v3.500h-1z" fill="#8fe08f" opacity=".7"/></svg>
<span class="t" style="top:472px;font-size:12.5px;left:24.2px;transform:scaleX(0.856);">EURNZD</span>
<span class="t tr" style="top:472px;font-size:12.5px;color:#0000ff;left:88.01px;transform:scaleX(0.870);">1.72532</span>
<span class="t tr" style="top:472px;font-size:12.5px;color:#0000ff;left:140.21px;transform:scaleX(0.870);">1.72579</span>
<div class="b" style="left:4px;top:493px;width:185px;height:19px;background:#fffacd;"></div>
<svg class="b" style="left:8px;top:498px" width="11" height="11" viewBox="0 0 11 11"><path d="M5.500 .8l5 5h-2.800v4h-4.400v-4h-2.800z" fill="#2fb52f" stroke="#0f7a0f" stroke-width=".9"/><path d="M5.500 2.500l2.500 2.600h-1.500v3.500h-1z" fill="#8fe08f" opacity=".7"/></svg>
<span class="t" style="top:492px;font-size:12.5px;left:24.2px;transform:scaleX(0.845);">EURCAD</span>
<span class="t tr" style="top:492px;font-size:12.5px;color:#0000ff;left:88.01px;transform:scaleX(0.870);">1.54074</span>
<span class="t tr" style="top:492px;font-size:12.5px;color:#0000ff;left:140.21px;transform:scaleX(0.870);">1.54096</span>
<div class="b" style="left:4px;top:513px;width:185px;height:19px;background:#fffacd;"></div>
<svg class="b" style="left:8px;top:518px" width="11" height="11" viewBox="0 0 11 11"><path d="M5.500 .8l5 5h-2.800v4h-4.400v-4h-2.800z" fill="#2fb52f" stroke="#0f7a0f" stroke-width=".9"/><path d="M5.500 2.500l2.500 2.600h-1.500v3.500h-1z" fill="#8fe08f" opacity=".7"/></svg>
<span class="t" style="top:512px;font-size:12.5px;left:24.2px;transform:scaleX(0.902);">CADCHF</span>
<span class="t tr" style="top:512px;font-size:12.5px;color:#0000ff;left:88.01px;transform:scaleX(0.870);">0.69423</span>
<span class="t tr" style="top:512px;font-size:12.5px;color:#0000ff;left:140.21px;transform:scaleX(0.870);">0.69435</span>
<div class="b" style="left:4px;top:533px;width:185px;height:19px;background:#fffacd;"></div>
<svg class="b" style="left:8px;top:538px" width="11" height="11" viewBox="0 0 11 11"><path d="M5.500 .8l5 5h-2.800v4h-4.400v-4h-2.800z" fill="#2fb52f" stroke="#0f7a0f" stroke-width=".9"/><path d="M5.500 2.500l2.500 2.600h-1.500v3.500h-1z" fill="#8fe08f" opacity=".7"/></svg>
<span class="t" style="top:532px;font-size:12.5px;left:24.2px;transform:scaleX(0.866);">NZDJPY</span>
<span class="t tr" style="top:532px;font-size:12.5px;color:#0000ff;left:94.97px;transform:scaleX(0.870);">70.660</span>
<span class="t tr" style="top:532px;font-size:12.5px;color:#0000ff;left:147.17px;transform:scaleX(0.870);">70.685</span>
<div class="b" style="left:4px;top:553px;width:185px;height:19px;background:#fffacd;"></div>
<svg class="b" style="left:8px;top:558px" width="11" height="11" viewBox="0 0 11 11"><path d="M3.300 .6h4.400v4h2.800l-5 5-5-5h2.800z" fill="#f25a2a" stroke="#a82a08" stroke-width=".9"/><path d="M4.300 1.500h1.400v4.500h-1.400z" fill="#ffb48a" opacity=".7"/></svg>
<span class="t" style="top:552px;font-size:12.5px;left:24.2px;transform:scaleX(0.879);">NZDUSD</span>
<span class="t tr" style="top:552px;font-size:12.5px;color:#ff0000;left:88.01px;transform:scaleX(0.870);">0.65868</span>
<span class="t tr" style="top:552px;font-size:12.5px;color:#ff0000;left:140.21px;transform:scaleX(0.870);">0.65878</span>
<div class="b" style="left:4px;top:573px;width:185px;height:19px;background:#fffacd;"></div>
<svg class="b" style="left:8px;top:578px" width="11" height="11" viewBox="0 0 11 11"><path d="M5.500 .8l5 5h-2.800v4h-4.400v-4h-2.800z" fill="#2fb52f" stroke="#0f7a0f" stroke-width=".9"/><path d="M5.500 2.500l2.500 2.600h-1.500v3.500h-1z" fill="#8fe08f" opacity=".7"/></svg>
<span class="t" style="top:572px;font-size:12.5px;left:24.2px;transform:scaleX(0.831);">EURDKK</span>
<span class="t tr" style="top:572px;font-size:12.5px;color:#0000ff;left:88.01px;transform:scaleX(0.870);">7.44532</span>
<span class="t tr" style="top:572px;font-size:12.5px;color:#0000ff;left:140.21px;transform:scaleX(0.870);">7.44569</span>
<div class="b" style="left:4px;top:593px;width:185px;height:19px;background:#fffacd;"></div>
<svg class="b" style="left:8px;top:598px" width="11" height="11" viewBox="0 0 11 11"><path d="M5.500 .8l5 5h-2.800v4h-4.400v-4h-2.800z" fill="#2fb52f" stroke="#0f7a0f" stroke-width=".9"/><path d="M5.500 2.500l2.500 2.600h-1.500v3.500h-1z" fill="#8fe08f" opacity=".7"/></svg>
<span class="t" style="top:592px;font-size:12.5px;left:24.2px;transform:scaleX(0.854);">EURHKD</span>
<span class="t tr" style="top:592px;font-size:12.5px;color:#0000ff;left:88.01px;transform:scaleX(0.870);">8.81034</span>
<span class="t tr" style="top:592px;font-size:12.5px;color:#0000ff;left:140.21px;transform:scaleX(0.870);">8.81044</span>
<div class="b" style="left:4px;top:613px;width:185px;height:19px;background:#fffacd;"></div>
<svg class="b" style="left:8px;top:618px" width="11" height="11" viewBox="0 0 11 11"><path d="M3.300 .6h4.400v4h2.800l-5 5-5-5h2.800z" fill="#f25a2a" stroke="#a82a08" stroke-width=".9"/><path d="M4.300 1.500h1.400v4.500h-1.400z" fill="#ffb48a" opacity=".7"/></svg>
<span class="t" style="top:612px;font-size:12.5px;left:24.2px;transform:scaleX(0.869);">EURNOK</span>
<span class="t tr" style="top:612px;font-size:12.5px;color:#ff0000;left:91.5px;transform:scaleX(0.870);">10.65...</span>
<span class="t tr" style="top:612px;font-size:12.5px;color:#ff0000;left:143.7px;transform:scaleX(0.870);">10.66...</span>
<div class="b" style="left:4px;top:633px;width:185px;height:19px;background:#fffacd;"></div>
<svg class="b" style="left:8px;top:638px" width="11" height="11" viewBox="0 0 11 11"><path d="M5.500 .8l5 5h-2.800v4h-4.400v-4h-2.800z" fill="#2fb52f" stroke="#0f7a0f" stroke-width=".9"/><path d="M5.500 2.500l2.500 2.600h-1.500v3.500h-1z" fill="#8fe08f" opacity=".7"/></svg>
<span class="t" style="top:632px;font-size:12.5px;left:24.2px;transform:scaleX(0.780);">EURSEK</span>
<span class="t tr" style="top:632px;font-size:12.5px;color:#0000ff;left:91.5px;transform:scaleX(0.870);">10.38...</span>
<span class="t tr" style="top:632px;font-size:12.5px;color:#0000ff;left:143.7px;transform:scaleX(0.870);">10.39...</span>
<div class="b" style="left:4px;top:653px;width:185px;height:19px;background:#fffacd;"></div>
<svg class="b" style="left:8px;top:658px" width="11" height="11" viewBox="0 0 11 11"><path d="M5.500 .8l5 5h-2.800v4h-4.400v-4h-2.800z" fill="#2fb52f" stroke="#0f7a0f" stroke-width=".9"/><path d="M5.500 2.500l2.500 2.600h-1.500v3.500h-1z" fill="#8fe08f" opacity=".7"/></svg>
<span class="t" style="top:652px;font-size:12.5px;left:24.2px;transform:scaleX(0.840);">EURPLN</span>
<span class="t tr" style="top:652px;font-size:12.5px;color:#0000ff;left:88.01px;transform:scaleX(0.870);">4.48300</span>
<span class="t tr" style="top:652px;font-size:12.5px;color:#0000ff;left:140.21px;transform:scaleX(0.870);">4.48431</span>
<div class="b" style="left:4px;top:673px;width:185px;height:19px;background:#fffacd;"></div>
<svg class="b" style="left:8px;top:678px" width="11" height="11" viewBox="0 0 11 11"><path d="M3.300 .6h4.400v4h2.800l-5 5-5-5h2.800z" fill="#f25a2a" stroke="#a82a08" stroke-width=".9"/><path d="M4.300 1.500h1.400v4.500h-1.400z" fill="#ffb48a" opacity=".7"/></svg>
<span class="t" style="top:672px;font-size:12.5px;left:24.2px;transform:scaleX(0.779);">EURTRY</span>
<span class="t tr" style="top:672px;font-size:12.5px;color:#ff0000;left:88.01px;transform:scaleX(0.870);">7.79892</span>
<span class="t tr" style="top:672px;font-size:12.5px;color:#ff0000;left:140.21px;transform:scaleX(0.870);">7.80416</span>
<div class="b" style="left:4px;top:693px;width:185px;height:19px;background:#fffacd;"></div>
<svg class="b" style="left:8px;top:698px" width="11" height="11" viewBox="0 0 11 11"><path d="M5.500 .8l5 5h-2.800v4h-4.400v-4h-2.800z" fill="#2fb52f" stroke="#0f7a0f" stroke-width=".9"/><path d="M5.500 2.500l2.500 2.600h-1.500v3.500h-1z" fill="#8fe08f" opacity=".7"/></svg>
<span class="t" style="top:692px;font-size:12.5px;left:24.2px;transform:scaleX(0.860);">GBPAUD</span>
<span class="t tr" style="top:692px;font-size:12.5px;color:#0000ff;left:88.01px;transform:scaleX(0.870);">1.80502</span>
<span class="t tr" style="top:692px;font-size:12.5px;color:#0000ff;left:140.21px;transform:scaleX(0.870);">1.80544</span>
<div class="b" style="left:4px;top:713px;width:185px;height:2px;background:#fffacd;"></div>
<div class="b" style="left:4px;top:112px;width:185px;height:603px;background:repeating-linear-gradient(#c3c3c3 0 1px,transparent 1px 20px);"></div>
<div class="b" style="left:83px;top:112px;width:1px;height:603px;background:#c3c3c3;"></div>
<div class="b" style="left:135px;top:112px;width:1px;height:603px;background:#c3c3c3;"></div>
<div class="b" style="left:189px;top:88px;width:17px;height:627px;background:#f0f0f0;"></div>
<div class="b" style="left:190px;top:105px;width:15px;height:266px;background:#cdcdcd;"></div>
<svg class="b" style="left:193px;top:93px" width="9" height="8" viewBox="0 0 9 8"><path d="M1 6l3.500-3.500 3.500 3.500" fill="none" stroke="#505050" stroke-width="1.700"/></svg>
<svg class="b" style="left:193px;top:702px" width="9" height="8" viewBox="0 0 9 8"><path d="M1 2l3.500 3.500 3.500-3.500" fill="none" stroke="#505050" stroke-width="1.700"/></svg>
<div class="b" style="left:3px;top:715px;width:204px;height:1px;background:#000;"></div>
<div class="b" style="left:6px;top:715px;width:65px;height:20px;background:#fff;border:1px solid #000;border-top:none;box-sizing:border-box;box-shadow:1px 1px 0 #808080;"></div>
<span class="t" style="top:715px;font-size:12.5px;left:15.5px;transform:scaleX(0.956);">Symbols</span>
<span class="t" style="top:715px;font-size:12.5px;color:#808080;left:81px;transform:scaleX(0.952);">Tick Chart</span>
<div class="b" style="left:144px;top:719px;width:1px;height:14px;background:#808080;"></div>
<div class="b" style="left:0px;top:740px;width:212px;height:1px;background:#a0a0a0;"></div>
</section>
<section id="chart">
<svg class="b" style="left:212px;top:72px" width="1386" height="647" viewBox="212 72 1386 647" shape-rendering="crispEdges">
<rect x="212" y="72" width="1386" height="647" fill="#000"/>
<path d="M215 171.5H1552" stroke="#b22222" stroke-width="1" stroke-dasharray="9 6 3 6" fill="none"/>
<path d="M215 179.5H1552" stroke="#b22222" stroke-width="1" stroke-dasharray="9 6 3 6" fill="none"/>
<rect x="215" y="374" width="1" height="32" fill="#006400"/>
<rect x="210" y="385" width="11" height="17" fill="#006400"/>
<rect x="231" y="385" width="1" height="75" fill="#b22222"/>
<rect x="226" y="385" width="11" height="35" fill="#b22222"/>
<rect x="247" y="339" width="1" height="95" fill="#006400"/>
<rect x="242" y="359" width="11" height="60" fill="#006400"/>
<rect x="263" y="331" width="1" height="76" fill="#b22222"/>
<rect x="258" y="359" width="11" height="41" fill="#b22222"/>
<rect x="279" y="387" width="1" height="62" fill="#b22222"/>
<rect x="274" y="400" width="11" height="11" fill="#b22222"/>
<rect x="295" y="368" width="1" height="48" fill="#006400"/>
<rect x="290" y="373" width="11" height="38" fill="#006400"/>
<rect x="311" y="316" width="1" height="90" fill="#006400"/>
<rect x="306" y="336" width="11" height="37" fill="#006400"/>
<rect x="327" y="328" width="1" height="74" fill="#b22222"/>
<rect x="322" y="334" width="11" height="26" fill="#b22222"/>
<rect x="343" y="227" width="1" height="141" fill="#006400"/>
<rect x="338" y="256" width="11" height="105" fill="#006400"/>
<rect x="359" y="225" width="1" height="59" fill="#b22222"/>
<rect x="354" y="255" width="11" height="8" fill="#b22222"/>
<rect x="375" y="256" width="1" height="84" fill="#b22222"/>
<rect x="370" y="261" width="11" height="6" fill="#b22222"/>
<rect x="391" y="203" width="1" height="74" fill="#006400"/>
<rect x="386" y="227" width="11" height="40" fill="#006400"/>
<rect x="407" y="203" width="1" height="56" fill="#006400"/>
<rect x="402" y="218" width="11" height="10" fill="#006400"/>
<rect x="423" y="187" width="1" height="36" fill="#006400"/>
<rect x="418" y="193" width="11" height="27" fill="#006400"/>
<rect x="439" y="187" width="1" height="32" fill="#006400"/>
<rect x="434" y="191" width="11" height="4" fill="#006400"/>
<rect x="455" y="168" width="1" height="36" fill="#b22222"/>
<rect x="450" y="191" width="11" height="7" fill="#b22222"/>
<rect x="471" y="185" width="1" height="19" fill="#006400"/>
<rect x="466" y="190" width="11" height="5" fill="#006400"/>
<rect x="487" y="183" width="1" height="21" fill="#b22222"/>
<rect x="482" y="192" width="11" height="6" fill="#b22222"/>
<rect x="503" y="159" width="1" height="52" fill="#006400"/>
<rect x="498" y="171" width="11" height="34" fill="#006400"/>
<rect x="519" y="127" width="1" height="86" fill="#b22222"/>
<rect x="514" y="171" width="11" height="35" fill="#b22222"/>
<rect x="535" y="196" width="1" height="39" fill="#006400"/>
<rect x="530" y="200" width="11" height="30" fill="#006400"/>
<rect x="551" y="198" width="1" height="27" fill="#b22222"/>
<rect x="546" y="204" width="11" height="10" fill="#b22222"/>
<rect x="567" y="165" width="1" height="44" fill="#006400"/>
<rect x="562" y="166" width="11" height="37" fill="#006400"/>
<rect x="583" y="129" width="1" height="44" fill="#006400"/>
<rect x="578" y="147" width="11" height="21" fill="#006400"/>
<rect x="599" y="147" width="1" height="52" fill="#b22222"/>
<rect x="594" y="148" width="11" height="26" fill="#b22222"/>
<rect x="615" y="146" width="1" height="51" fill="#006400"/>
<rect x="610" y="157" width="11" height="17" fill="#006400"/>
<rect x="631" y="129" width="1" height="67" fill="#006400"/>
<rect x="626" y="147" width="11" height="12" fill="#006400"/>
<rect x="647" y="96" width="1" height="82" fill="#b22222"/>
<rect x="642" y="147" width="11" height="31" fill="#b22222"/>
<rect x="663" y="152" width="1" height="46" fill="#006400"/>
<rect x="658" y="167" width="11" height="13" fill="#006400"/>
<rect x="679" y="155" width="1" height="49" fill="#b22222"/>
<rect x="674" y="167" width="11" height="29" fill="#b22222"/>
<rect x="695" y="161" width="1" height="44" fill="#006400"/>
<rect x="690" y="179" width="11" height="18" fill="#006400"/>
<rect x="711" y="147" width="1" height="41" fill="#006400"/>
<rect x="706" y="163" width="11" height="18" fill="#006400"/>
<rect x="727" y="150" width="1" height="53" fill="#b22222"/>
<rect x="722" y="165" width="11" height="2" fill="#b22222"/>
<rect x="743" y="141" width="1" height="73" fill="#b22222"/>
<rect x="738" y="164" width="11" height="35" fill="#b22222"/>
<rect x="1255" y="301" width="1" height="51" fill="#006400"/>
<rect x="1250" y="313" width="11" height="23" fill="#006400"/>
<rect x="1271" y="304" width="1" height="52" fill="#b22222"/>
<rect x="1266" y="312" width="11" height="39" fill="#b22222"/>
<rect x="1287" y="333" width="1" height="63" fill="#006400"/>
<rect x="1282" y="339" width="11" height="11" fill="#006400"/>
<rect x="1303" y="273" width="1" height="67" fill="#006400"/>
<rect x="1298" y="285" width="11" height="55" fill="#006400"/>
<rect x="1319" y="239" width="1" height="49" fill="#006400"/>
<rect x="1314" y="261" width="11" height="26" fill="#006400"/>
<rect x="1335" y="228" width="1" height="39" fill="#006400"/>
<rect x="1330" y="249" width="11" height="13" fill="#006400"/>
<rect x="1351" y="234" width="1" height="17" fill="#006400"/>
<rect x="1346" y="244" width="11" height="5" fill="#006400"/>
<rect x="1367" y="179" width="1" height="65" fill="#006400"/>
<rect x="1362" y="217" width="11" height="26" fill="#006400"/>
<rect x="1383" y="198" width="1" height="46" fill="#006400"/>
<rect x="1378" y="208" width="11" height="9" fill="#006400"/>
<rect x="1399" y="193" width="1" height="64" fill="#b22222"/>
<rect x="1394" y="209" width="11" height="28" fill="#b22222"/>
<rect x="1415" y="231" width="1" height="82" fill="#b22222"/>
<rect x="1410" y="235" width="11" height="48" fill="#b22222"/>
<rect x="1431" y="241" width="1" height="66" fill="#006400"/>
<rect x="1426" y="242" width="11" height="41" fill="#006400"/>
<rect x="1447" y="222" width="1" height="51" fill="#006400"/>
<rect x="1442" y="241" width="11" height="4" fill="#006400"/>
<rect x="1463" y="198" width="1" height="45" fill="#006400"/>
<rect x="1458" y="221" width="11" height="22" fill="#006400"/>
<rect x="1479" y="214" width="1" height="60" fill="#b22222"/>
<rect x="1474" y="219" width="11" height="53" fill="#b22222"/>
<rect x="1495" y="193" width="1" height="86" fill="#006400"/>
<rect x="1490" y="232" width="11" height="40" fill="#006400"/>
<rect x="1511" y="154" width="1" height="79" fill="#006400"/>
<rect x="1506" y="166" width="11" height="67" fill="#006400"/>
<rect x="647" y="96" width="905" height="1" fill="#006400"/>
<rect x="647" y="242" width="905" height="1" fill="#006400"/>
<rect x="647" y="286" width="905" height="1" fill="#006400"/>
<rect x="647" y="331" width="905" height="1" fill="#006400"/>
<rect x="647" y="387" width="905" height="1" fill="#006400"/>
<rect x="647" y="477" width="905" height="1" fill="#006400"/>
<path d="M647 96h1v1h-1zM648 97h1v1h-1zM649 98h1v1h-1zM653 102h1v1h-1zM654 103h1v1h-1zM655 104h1v1h-1zM659 108h1v1h-1zM660 109h1v1h-1zM661 110h1v1h-1zM665 115h1v1h-1zM666 116h1v1h-1zM667 117h1v1h-1zM671 121h1v1h-1zM672 122h1v1h-1zM673 123h1v1h-1zM677 127h1v1h-1zM678 128h1v1h-1zM679 129h1v1h-1zM683 133h1v1h-1zM684 134h1v1h-1zM685 135h1v1h-1zM689 139h1v1h-1zM690 141h1v1h-1zM691 142h1v1h-1zM695 146h1v1h-1zM696 147h1v1h-1zM697 148h1v1h-1zM701 152h1v1h-1zM702 153h1v1h-1zM703 154h1v1h-1zM707 158h1v1h-1zM708 159h1v1h-1zM709 160h1v1h-1zM713 164h1v1h-1zM714 165h1v1h-1zM715 166h1v1h-1zM719 171h1v1h-1zM720 172h1v1h-1zM721 173h1v1h-1zM725 177h1v1h-1zM726 178h1v1h-1zM727 179h1v1h-1zM731 183h1v1h-1zM732 184h1v1h-1zM733 185h1v1h-1zM737 189h1v1h-1zM738 190h1v1h-1zM739 191h1v1h-1zM743 195h1v1h-1zM744 196h1v1h-1zM745 197h1v1h-1zM749 202h1v1h-1zM750 203h1v1h-1zM751 204h1v1h-1zM755 208h1v1h-1zM756 209h1v1h-1zM757 210h1v1h-1zM761 214h1v1h-1zM762 215h1v1h-1zM763 216h1v1h-1zM767 220h1v1h-1zM768 221h1v1h-1zM769 222h1v1h-1zM773 226h1v1h-1zM774 227h1v1h-1zM775 229h1v1h-1zM779 233h1v1h-1zM780 234h1v1h-1zM781 235h1v1h-1zM785 239h1v1h-1zM786 240h1v1h-1zM787 241h1v1h-1zM791 245h1v1h-1zM792 246h1v1h-1zM793 247h1v1h-1zM797 251h1v1h-1zM798 252h1v1h-1zM799 253h1v1h-1zM803 258h1v1h-1zM804 259h1v1h-1zM805 260h1v1h-1zM809 264h1v1h-1zM810 265h1v1h-1zM811 266h1v1h-1zM815 270h1v1h-1zM816 271h1v1h-1zM817 272h1v1h-1zM821 276h1v1h-1zM822 277h1v1h-1zM823 278h1v1h-1zM827 282h1v1h-1zM828 283h1v1h-1zM829 284h1v1h-1zM833 289h1v1h-1zM834 290h1v1h-1zM835 291h1v1h-1zM839 295h1v1h-1zM840 296h1v1h-1zM841 297h1v1h-1zM845 301h1v1h-1zM846 302h1v1h-1zM847 303h1v1h-1zM851 307h1v1h-1zM852 308h1v1h-1zM853 309h1v1h-1zM857 313h1v1h-1zM858 314h1v1h-1zM859 315h1v1h-1zM863 320h1v1h-1zM864 321h1v1h-1zM865 322h1v1h-1zM869 326h1v1h-1zM870 327h1v1h-1zM871 328h1v1h-1zM875 332h1v1h-1zM876 333h1v1h-1zM877 334h1v1h-1zM881 338h1v1h-1zM882 339h1v1h-1zM883 340h1v1h-1zM887 344h1v1h-1zM888 346h1v1h-1zM889 347h1v1h-1zM893 351h1v1h-1zM894 352h1v1h-1zM895 353h1v1h-1zM899 357h1v1h-1zM900 358h1v1h-1zM901 359h1v1h-1zM905 363h1v1h-1zM906 364h1v1h-1zM907 365h1v1h-1zM911 369h1v1h-1zM912 370h1v1h-1zM913 371h1v1h-1zM917 376h1v1h-1zM918 377h1v1h-1zM919 378h1v1h-1zM923 382h1v1h-1zM924 383h1v1h-1zM925 384h1v1h-1zM929 388h1v1h-1zM930 389h1v1h-1zM931 390h1v1h-1zM935 394h1v1h-1zM936 395h1v1h-1zM937 396h1v1h-1zM941 400h1v1h-1zM942 401h1v1h-1zM943 402h1v1h-1zM947 407h1v1h-1zM948 408h1v1h-1zM949 409h1v1h-1zM953 413h1v1h-1zM954 414h1v1h-1zM955 415h1v1h-1zM959 419h1v1h-1zM960 420h1v1h-1zM961 421h1v1h-1zM965 425h1v1h-1zM966 426h1v1h-1zM967 427h1v1h-1zM971 431h1v1h-1zM972 432h1v1h-1zM973 434h1v1h-1zM977 438h1v1h-1zM978 439h1v1h-1zM979 440h1v1h-1zM983 444h1v1h-1zM984 445h1v1h-1zM985 446h1v1h-1zM989 450h1v1h-1zM990 451h1v1h-1zM991 452h1v1h-1zM995 456h1v1h-1zM996 457h1v1h-1zM997 458h1v1h-1zM1001 462h1v1h-1zM1002 464h1v1h-1zM1003 465h1v1h-1zM1007 469h1v1h-1zM1008 470h1v1h-1zM1009 471h1v1h-1zM1013 475h1v1h-1zM1014 476h1v1h-1zM1015 477h1v1h-1z" fill="#b22222"/>
<path d="M215 373L231 384.5L240 386.5L263 388.5L287 392L303 390.5L327 387L343 376L360 363L376 355L395 340.5L417 321L440 297L470 268.5L497 242.5L520 226L545 210L567 200.5L583 195L599 190L615 186L631 182.8L647 181.3L663 180.2L679 182L695 181L711 178.2L727 176L743 182L759 189.5L775 197L800 212" stroke="#006400" stroke-width="1" fill="none"/>
<path d="M1239 338.5L1255 340L1271 341.5L1287 339L1303 334.5L1319 330.7L1335 327.5L1351 322.7L1367 310L1383 299L1399 288.5L1415 284.5L1431 276L1447 267L1463 261L1479 254.5L1495 244.5L1511 236.5" stroke="#006400" stroke-width="1" fill="none"/>
<rect x="212" y="72" width="3" height="647" fill="#000"/>
<rect x="214" y="74" width="1" height="625" fill="#b22222"/>
<rect x="214" y="74" width="1339" height="1" fill="#b22222"/>
<rect x="1552" y="74" width="1" height="625" fill="#b22222"/>
<rect x="214" y="489" width="1339" height="1" fill="#b22222"/>
<rect x="1552" y="490" width="1" height="1" fill="#000"/>
<rect x="214" y="490" width="1" height="1" fill="#000"/>
<rect x="214" y="491" width="1339" height="1" fill="#b22222"/>
<rect x="214" y="698" width="1339" height="1" fill="#b22222"/>
<rect x="1553" y="107" width="3" height="1" fill="#b22222"/>
<rect x="1553" y="142" width="3" height="1" fill="#b22222"/>
<rect x="1553" y="176" width="3" height="1" fill="#b22222"/>
<rect x="1553" y="211" width="3" height="1" fill="#b22222"/>
<rect x="1553" y="245" width="3" height="1" fill="#b22222"/>
<rect x="1553" y="280" width="3" height="1" fill="#b22222"/>
<rect x="1553" y="314" width="3" height="1" fill="#b22222"/>
<rect x="1553" y="348" width="3" height="1" fill="#b22222"/>
<rect x="1553" y="383" width="3" height="1" fill="#b22222"/>
<rect x="1553" y="417" width="3" height="1" fill="#b22222"/>
<rect x="1553" y="452" width="3" height="1" fill="#b22222"/>
<rect x="1553" y="486" width="3" height="1" fill="#b22222"/>
<rect x="1553" y="493" width="3" height="1" fill="#b22222"/>
<rect x="1553" y="570" width="3" height="1" fill="#b22222"/>
<rect x="1553" y="603" width="3" height="1" fill="#b22222"/>
<rect x="1553" y="636" width="3" height="1" fill="#b22222"/>
<rect x="1553" y="697" width="3" height="1" fill="#b22222"/>
<rect x="215" y="699" width="1" height="3" fill="#b22222"/>
<rect x="279" y="699" width="1" height="3" fill="#b22222"/>
<rect x="343" y="699" width="1" height="3" fill="#b22222"/>
<rect x="407" y="699" width="1" height="3" fill="#b22222"/>
<rect x="471" y="699" width="1" height="3" fill="#b22222"/>
<rect x="535" y="699" width="1" height="3" fill="#b22222"/>
<rect x="599" y="699" width="1" height="3" fill="#b22222"/>
<rect x="663" y="699" width="1" height="3" fill="#b22222"/>
<rect x="727" y="699" width="1" height="3" fill="#b22222"/>
<rect x="791" y="699" width="1" height="3" fill="#b22222"/>
<rect x="855" y="699" width="1" height="3" fill="#b22222"/>
<rect x="919" y="699" width="1" height="3" fill="#b22222"/>
<rect x="983" y="699" width="1" height="3" fill="#b22222"/>
<rect x="1047" y="699" width="1" height="3" fill="#b22222"/>
<rect x="1111" y="699" width="1" height="3" fill="#b22222"/>
<rect x="1175" y="699" width="1" height="3" fill="#b22222"/>
<rect x="1239" y="699" width="1" height="3" fill="#b22222"/>
<rect x="1303" y="699" width="1" height="3" fill="#b22222"/>
<rect x="1367" y="699" width="1" height="3" fill="#b22222"/>
<rect x="1431" y="699" width="1" height="3" fill="#b22222"/>
<rect x="1495" y="699" width="1" height="3" fill="#b22222"/>
<path d="M216 570.5H1552" stroke="#c0c0c0" stroke-width="1" stroke-dasharray="3 3" fill="none"/>
<path d="M216 636.5H1552" stroke="#c0c0c0" stroke-width="1" stroke-dasharray="3 3" fill="none"/>
<path d="M215.5 621.6L231.5 646.2L247.5 602L263.5 594.2L279.5 648.5L295.5 598.2L311.5 548L327.5 563.8L343.5 502.3L359.5 524L375.5 560.1L391.5 551.4L407.5 560.1L423.5 562.4L439.5 568.2L455.5 570.2L471.5 574.5L487.5 578.3L503.5 574.5L519.5 578L535.5 598.2L551.5 605.4L567.5 583.2L583.5 560L599.5 574.5L615.5 574.5L631.5 560L647.5 556L663.5 592L679.5 627L695.5 609.2L711.5 585.5L727.5 604.9L743.5 665.5L759.5 688L775.5 665.5L791.5 648.2L807.5 632.9L823.5 628.5L839.5 624.5L855.5 623L871.5 620.7L887.5 619L903.5 649L919.5 647.3L935.5 655.4L951.5 651.9L967.5 651L983.5 654.5L999.5 648.2L1015.5 632.3L1031.5 612L1047.5 593.3L1063.5 578.3L1079.5 586L1095.5 592.4L1111.5 560L1127.5 545L1143.5 572L1159.5 606.3L1175.5 607.7L1191.5 604L1207.5 602.8L1223.5 614.1L1239.5 592.4L1255.5 585.2L1271.5 602L1287.5 619.3L1303.5 567.3L1319.5 547.1L1335.5 547.1L1351.5 554.3L1367.5 553.4L1383.5 563.3L1399.5 574L1415.5 597.1L1431.5 593.4L1447.5 586.2L1463.5 575.5L1479.5 597.1L1495.5 587.6L1511.5 546.3" stroke="#20b2aa" stroke-width="1" fill="none"/>
<rect x="1554" y="161" width="41" height="11" fill="#b22222"/>
<path d="M218 85.200l3.500-4.200 3.500 4.200z" fill="#b22222" shape-rendering="auto"/>
</svg>
<span class="t" style="top:73px;font-size:10px;color:#c82828;left:230px;transform:scaleX(0.974);">AUDUSD,H1</span>
<span class="t" style="top:73px;font-size:10px;color:#c82828;left:292px;transform:scaleX(0.921);">0.69732</span>
<span class="t" style="top:73px;font-size:10px;color:#c82828;left:328px;transform:scaleX(0.921);">0.69891</span>
<span class="t" style="top:73px;font-size:10px;color:#c82828;left:364px;transform:scaleX(0.921);">0.69732</span>
<span class="t" style="top:73px;font-size:10px;color:#c82828;left:400px;transform:scaleX(0.921);">0.69865</span>
<span class="t" style="top:157px;font-size:10px;color:#b02424;left:221px;transform:scaleX(0.932);">#1713154314 sell 1.00</span>
<span class="t" style="top:165px;font-size:10px;color:#b02424;left:221px;transform:scaleX(0.932);">#1713152671 sell 1.00</span>
<span class="t" style="top:98px;font-size:10px;color:#c82828;left:1558px;transform:scaleX(0.921);">0.69985</span>
<span class="t" style="top:133px;font-size:10px;color:#c82828;left:1558px;transform:scaleX(0.921);">0.69915</span>
<span class="t" style="top:167px;font-size:10px;color:#c82828;left:1558px;transform:scaleX(0.921);">0.69845</span>
<span class="t" style="top:202px;font-size:10px;color:#c82828;left:1558px;transform:scaleX(0.921);">0.69775</span>
<span class="t" style="top:236px;font-size:10px;color:#c82828;left:1558px;transform:scaleX(0.921);">0.69705</span>
<span class="t" style="top:271px;font-size:10px;color:#c82828;left:1558px;transform:scaleX(0.921);">0.69635</span>
<span class="t" style="top:305px;font-size:10px;color:#c82828;left:1558px;transform:scaleX(0.921);">0.69565</span>
<span class="t" style="top:339px;font-size:10px;color:#c82828;left:1558px;transform:scaleX(0.921);">0.69495</span>
<span class="t" style="top:374px;font-size:10px;color:#c82828;left:1558px;transform:scaleX(0.921);">0.69425</span>
<span class="t" style="top:408px;font-size:10px;color:#c82828;left:1558px;transform:scaleX(0.921);">0.69355</span>
<span class="t" style="top:443px;font-size:10px;color:#c82828;left:1558px;transform:scaleX(0.921);">0.69285</span>
<span class="t" style="top:477px;font-size:10px;color:#c82828;left:1558px;transform:scaleX(0.921);">0.69215</span>
<span class="t" style="top:157px;font-size:10px;left:1558px;transform:scaleX(0.921);">0.69865</span>
<span class="t tr" style="top:81px;font-size:10px;color:#007c00;left:1526.47px;transform:scaleX(0.920);">100.0</span>
<span class="t tr" style="top:227px;font-size:10px;color:#007c00;left:1532.04px;transform:scaleX(0.920);">61.8</span>
<span class="t tr" style="top:271px;font-size:10px;color:#007c00;left:1532.04px;transform:scaleX(0.920);">50.0</span>
<span class="t tr" style="top:316px;font-size:10px;color:#007c00;left:1532.04px;transform:scaleX(0.920);">38.2</span>
<span class="t tr" style="top:372px;font-size:10px;color:#007c00;left:1532.04px;transform:scaleX(0.920);">23.6</span>
<span class="t tr" style="top:462px;font-size:10px;color:#007c00;left:1537.6px;transform:scaleX(0.920);">0.0</span>
<span class="t" style="top:491px;font-size:10px;color:#c82828;left:219px;transform:scaleX(0.947);">CCI(14) 175.4177</span>
<span class="t" style="top:489px;font-size:10px;color:#c82828;left:1556px;transform:scaleX(0.918);">332.9014</span>
<span class="t" style="top:561px;font-size:10px;color:#c82828;left:1556px;transform:scaleX(0.920);">100</span>
<span class="t" style="top:595px;font-size:10px;color:#c82828;left:1556px;transform:scaleX(0.920);">0.00</span>
<span class="t" style="top:628px;font-size:10px;color:#c82828;left:1555px;transform:scaleX(0.920);">-100</span>
<span class="t" style="top:682px;font-size:10px;color:#c82828;left:1556px;transform:scaleX(0.917);">-284.1723</span>
<span class="t" style="top:698px;font-size:10px;color:#c82828;left:214px;transform:scaleX(0.915);">8 Jul 2020</span>
<span class="t" style="top:698px;font-size:10px;color:#c82828;left:278px;transform:scaleX(0.915);">8 Jul 12:00</span>
<span class="t" style="top:698px;font-size:10px;color:#c82828;left:342px;transform:scaleX(0.915);">8 Jul 16:00</span>
<span class="t" style="top:698px;font-size:10px;color:#c82828;left:406px;transform:scaleX(0.915);">8 Jul 20:00</span>
<span class="t" style="top:698px;font-size:10px;color:#c82828;left:470px;transform:scaleX(0.915);">9 Jul 00:00</span>
<span class="t" style="top:698px;font-size:10px;color:#c82828;left:534px;transform:scaleX(0.915);">9 Jul 04:00</span>
<span class="t" style="top:698px;font-size:10px;color:#c82828;left:598px;transform:scaleX(0.915);">9 Jul 08:00</span>
<span class="t" style="top:698px;font-size:10px;color:#c82828;left:662px;transform:scaleX(0.915);">9 Jul 12:00</span>
<span class="t" style="top:698px;font-size:10px;color:#c82828;left:726px;transform:scaleX(0.915);">9 Jul 16:00</span>
<span class="t" style="top:698px;font-size:10px;color:#c82828;left:790px;transform:scaleX(0.915);">9 Jul 20:00</span>
<span class="t" style="top:698px;font-size:10px;color:#c82828;left:854px;transform:scaleX(0.915);">10 Jul 00:00</span>
<span class="t" style="top:698px;font-size:10px;color:#c82828;left:918px;transform:scaleX(0.915);">10 Jul 04:00</span>
<span class="t" style="top:698px;font-size:10px;color:#c82828;left:982px;transform:scaleX(0.915);">10 Jul 08:00</span>
<span class="t" style="top:698px;font-size:10px;color:#c82828;left:1046px;transform:scaleX(0.915);">10 Jul 12:00</span>
<span class="t" style="top:698px;font-size:10px;color:#c82828;left:1110px;transform:scaleX(0.915);">10 Jul 16:00</span>
<span class="t" style="top:698px;font-size:10px;color:#c82828;left:1174px;transform:scaleX(0.915);">10 Jul 20:00</span>
<span class="t" style="top:698px;font-size:10px;color:#c82828;left:1238px;transform:scaleX(0.915);">13 Jul 00:00</span>
<span class="t" style="top:698px;font-size:10px;color:#c82828;left:1302px;transform:scaleX(0.915);">13 Jul 04:00</span>
<span class="t" style="top:698px;font-size:10px;color:#c82828;left:1366px;transform:scaleX(0.915);">13 Jul 08:00</span>
<span class="t" style="top:698px;font-size:10px;color:#c82828;left:1430px;transform:scaleX(0.915);">13 Jul 12:00</span>
<span class="t" style="top:698px;font-size:10px;color:#c82828;left:1494px;transform:scaleX(0.915);">13 Jul 16:00</span>
<div class="b" style="left:218px;top:92px;width:46px;height:22px;background:repeating-linear-gradient(45deg,rgba(255,255,255,.05) 0 1px,rgba(0,0,0,0) 1px 2.830px),linear-gradient(#f04848,#e03636);"></div>
<div class="b" style="left:218px;top:114px;width:96px;height:34px;background:repeating-linear-gradient(45deg,rgba(255,255,255,.05) 0 1px,rgba(0,0,0,0) 1px 2.830px),linear-gradient(#d93030 0,#ce2626 48%,#bf1a1a 50%,#b51010 100%);"></div>
<div class="b" style="left:365px;top:92px;width:46px;height:22px;background:repeating-linear-gradient(45deg,rgba(255,255,255,.05) 0 1px,rgba(0,0,0,0) 1px 2.830px),linear-gradient(#f04848,#e03636);"></div>
<div class="b" style="left:316px;top:114px;width:95px;height:34px;background:repeating-linear-gradient(45deg,rgba(255,255,255,.05) 0 1px,rgba(0,0,0,0) 1px 2.830px),linear-gradient(#d93030 0,#ce2626 48%,#bf1a1a 50%,#b51010 100%);"></div>
<div class="b" style="left:222px;top:113px;width:38px;height:1px;background:#a01010;"></div>
<div class="b" style="left:369px;top:113px;width:38px;height:1px;background:#a01010;"></div>
<div class="b" style="left:222px;top:114px;width:38px;height:1px;background:#f5a9a9;"></div>
<div class="b" style="left:369px;top:114px;width:38px;height:1px;background:#f5a9a9;"></div>
<div class="b" style="left:266px;top:92px;width:97px;height:20px;background:#fff;border:1px solid #8a8a8a;box-sizing:border-box;"></div>
<div class="b" style="left:267px;top:93px;width:18px;height:18px;background:linear-gradient(#eeeeee,#e0e0e0);border-right:1px solid #adadad;"></div>
<div class="b" style="left:344px;top:93px;width:18px;height:18px;background:linear-gradient(#eeeeee,#e0e0e0);border-left:1px solid #adadad;box-sizing:border-box;"></div>
<svg class="b" style="left:273px;top:100px" width="6" height="3" viewBox="0 0 6 3"><path d="M0 0h6L3 3z" fill="#000"/></svg>
<svg class="b" style="left:350px;top:100px" width="6" height="3" viewBox="0 0 6 3"><path d="M0 3h6L3 0z" fill="#000"/></svg>
<span class="t tr" style="top:92px;font-size:12.5px;left:315.17px;transform:scaleX(0.875);">1.00</span>
<span class="t" style="top:93px;font-size:12.5px;color:#fff;left:227.5px;transform:scaleX(0.795);">SELL</span>
<span class="t" style="top:93px;font-size:12.5px;color:#fff;left:376px;transform:scaleX(0.848);">BUY</span>
<span class="t" style="top:128px;font-size:11.5px;color:#fff;left:231.5px;transform:scaleX(1.063);-webkit-text-stroke:.3px #fff;">0.69</span>
<span class="t" style="top:128px;font-size:11.5px;color:#fff;left:329px;transform:scaleX(1.063);-webkit-text-stroke:.3px #fff;">0.69</span>
<span class="t" style="left:260px;top:111px;font-size:32px;line-height:40px;color:#fff;-webkit-text-stroke:.35px #c92424;transform:scaleX(0.997);">86</span>
<span class="t" style="left:357px;top:111px;font-size:32px;line-height:40px;color:#fff;-webkit-text-stroke:.35px #c92424;transform:scaleX(0.969);">87</span>
<span class="t" style="top:113px;font-size:12.5px;color:#fff;left:297px;transform:scaleX(0.906);">5</span>
<span class="t" style="top:113px;font-size:12.5px;color:#fff;left:395px;transform:scaleX(0.619);">1</span>
</section>
<section id="chart-tabs">
<div class="b" style="left:212px;top:719px;width:1388px;height:1px;background:#fff;"></div>
<div class="b" style="left:212px;top:720px;width:1388px;height:1px;background:#f0f0f0;"></div>
<div class="b" style="left:212px;top:722px;width:1388px;height:19px;background:#f0f0f0;"></div>
<span class="t" style="top:721px;font-size:12.5px;color:#707070;left:227px;transform:scaleX(0.849);">EURUSD,H4</span>
<span class="t" style="top:721px;font-size:12.5px;color:#707070;left:310px;transform:scaleX(0.902);">USDCHF,H4</span>
<span class="t" style="top:721px;font-size:12.5px;color:#707070;left:394.5px;transform:scaleX(0.869);">GBPUSD,H4</span>
<span class="t" style="top:721px;font-size:12.5px;color:#707070;left:479px;transform:scaleX(0.868);">USDJPY,H4</span>
<div class="b" style="left:300px;top:724px;width:1px;height:15px;background:#808080;"></div>
<div class="b" style="left:384px;top:724px;width:1px;height:15px;background:#808080;"></div>
<div class="b" style="left:468px;top:724px;width:1px;height:15px;background:#808080;"></div>
<div class="b" style="left:548px;top:721px;width:87px;height:19px;background:#fff;border:1px solid #000;border-top:none;box-sizing:border-box;box-shadow:1px 1px 0 #808080;"></div>
<span class="t" style="top:721px;font-size:12.5px;left:560px;transform:scaleX(0.876);">AUDUSD,H1</span>
<svg class="b" style="left:1567px;top:726px" width="6" height="8" viewBox="0 0 6 8"><path d="M4.500 .5v7l-3.500-3.500z" fill="#a0a0a0"/></svg>
<svg class="b" style="left:1586px;top:726px" width="6" height="8" viewBox="0 0 6 8"><path d="M1 .5v7l3.500-3.500z" fill="#a0a0a0"/></svg>
<div class="b" style="left:1598px;top:72px;width:1px;height:669px;background:#fff;"></div>
<div class="b" style="left:1599px;top:72px;width:1px;height:669px;background:#f0f0f0;"></div>
<div class="b" style="left:210px;top:721px;width:1390px;height:1px;background:#000;"></div>
<div class="b" style="left:0px;top:741px;width:1600px;height:1px;background:#fff;"></div>
</section>
<section id="terminal">
<div class="b" style="left:0px;top:742px;width:1600px;height:135px;background:#f0f0f0;"></div>
<svg class="b" style="left:4px;top:747px" width="7" height="7" viewBox="0 0 7 7"><path d="M1 1l5 5M6 1l-5 5" stroke="#000" stroke-width="1.700"/></svg>
<div class="b" style="left:2px;top:759px;width:12px;height:114px;background:linear-gradient(#ccdcee,#dbe6f2);"></div>
<span class="t" style="left:2px;top:871px;font-size:11.500px;line-height:12px;color:#222;transform-origin:0 0;transform:rotate(-90deg) scaleX(0.97);">Terminal</span>
<div class="b" style="left:15px;top:745px;width:1582px;height:107px;background:#fff;border-top:1px solid #a0a0a0;border-left:1px solid #a0a0a0;box-sizing:border-box;"></div>
<div class="b" style="left:171px;top:746px;width:1px;height:24px;background:#e2e2e2;"></div>
<div class="b" style="left:388px;top:746px;width:1px;height:24px;background:#e2e2e2;"></div>
<div class="b" style="left:496px;top:746px;width:1px;height:24px;background:#e2e2e2;"></div>
<div class="b" style="left:580px;top:746px;width:1px;height:24px;background:#e2e2e2;"></div>
<div class="b" style="left:688px;top:746px;width:1px;height:24px;background:#e2e2e2;"></div>
<div class="b" style="left:808px;top:746px;width:1px;height:24px;background:#e2e2e2;"></div>
<div class="b" style="left:928px;top:746px;width:1px;height:24px;background:#e2e2e2;"></div>
<div class="b" style="left:1048px;top:746px;width:1px;height:24px;background:#e2e2e2;"></div>
<div class="b" style="left:1168px;top:746px;width:1px;height:24px;background:#e2e2e2;"></div>
<div class="b" style="left:1288px;top:746px;width:1px;height:24px;background:#e2e2e2;"></div>
<div class="b" style="left:1408px;top:746px;width:1px;height:24px;background:#e2e2e2;"></div>
<div class="b" style="left:1596px;top:746px;width:1px;height:24px;background:#e2e2e2;"></div>
<div class="b" style="left:16px;top:770px;width:1580px;height:1px;background:#d0d0d0;"></div>
<span class="t" style="top:748px;font-size:12.5px;left:22px;transform:scaleX(0.948);">Order</span>
<span class="t tr" style="top:748px;font-size:12.5px;left:356.69px;transform:scaleX(0.981);">Time</span>
<span class="t tr" style="top:748px;font-size:12.5px;left:464.9px;transform:scaleX(0.897);">Type</span>
<span class="t tr" style="top:748px;font-size:12.5px;left:551.18px;transform:scaleX(0.835);">Size</span>
<span class="t tr" style="top:748px;font-size:12.5px;left:641.82px;transform:scaleX(0.979);">Symbol</span>
<span class="t tr" style="top:748px;font-size:12.5px;left:775.02px;transform:scaleX(0.923);">Price</span>
<span class="t tr" style="top:748px;font-size:12.5px;left:897.29px;transform:scaleX(0.906);">S / L</span>
<span class="t tr" style="top:748px;font-size:12.5px;left:1016.83px;transform:scaleX(0.910);">T / P</span>
<span class="t tr" style="top:748px;font-size:12.5px;left:1135.02px;transform:scaleX(0.923);">Price</span>
<span class="t tr" style="top:748px;font-size:12.5px;left:1214.24px;transform:scaleX(0.979);">Commission</span>
<span class="t tr" style="top:748px;font-size:12.5px;left:1371.73px;transform:scaleX(0.905);">Swap</span>
<span class="t tr" style="top:748px;font-size:12.5px;left:1561.32px;transform:scaleX(0.987);">Profit</span>
<span class="t" style="top:750px;font-size:9px;color:#555;left:63.5px;">/</span>
<svg class="b" style="left:19px;top:773px" width="15" height="15" viewBox="0 0 15 15"><path d="M.5 .5h7l3 3v10.500h-10z" fill="#fbfbfb" stroke="#8a8a8a"/><path d="M7.500 .5v3h3" fill="#e8e8e8" stroke="#8a8a8a"/><circle cx="11" cy="11.300" r="3.200" fill="#f4551f" stroke="#b83008" stroke-width=".8"/><circle cx="10.200" cy="10.300" r="1" fill="#ffb08a"/></svg>
<span class="t" style="top:770px;font-size:12.5px;left:38px;transform:scaleX(0.853);">1713152671</span>
<span class="t tr" style="top:770px;font-size:12.5px;left:270.81px;transform:scaleX(0.890);">2020.07.13 17:40:46</span>
<span class="t tr" style="top:770px;font-size:12.5px;left:474.74px;transform:scaleX(0.970);">sell</span>
<span class="t tr" style="top:770px;font-size:12.5px;left:553.17px;transform:scaleX(0.890);">1.00</span>
<span class="t tr" style="top:770px;font-size:12.5px;left:644.49px;transform:scaleX(0.970);">audusd</span>
<span class="t tr" style="top:770px;font-size:12.5px;left:760.31px;transform:scaleX(0.890);">0.69839</span>
<span class="t tr" style="top:770px;font-size:12.5px;left:880.31px;transform:scaleX(0.890);">0.00000</span>
<span class="t tr" style="top:770px;font-size:12.5px;left:1000.31px;transform:scaleX(0.890);">0.00000</span>
<span class="t tr" style="top:770px;font-size:12.5px;left:1120.31px;transform:scaleX(0.890);">0.69871</span>
<span class="t tr" style="top:770px;font-size:12.5px;left:1257.01px;transform:scaleX(0.890);">-2.51</span>
<span class="t tr" style="top:770px;font-size:12.5px;left:1381.17px;transform:scaleX(0.890);">0.00</span>
<span class="t tr" style="top:770px;font-size:12.5px;left:1537.06px;transform:scaleX(0.890);">-32.00</span>
<svg class="b" style="left:1582px;top:776px" width="8" height="8" viewBox="0 0 8 8"><path d="M1 1l5.500 5.500M6.500 1l-5.500 5.500" stroke="#909090" stroke-width="1.700"/></svg>
<div class="b" style="left:170px;top:771px;width:1px;height:19px;background:#d8d8d8;"></div>
<div class="b" style="left:387px;top:771px;width:1px;height:19px;background:#d8d8d8;"></div>
<div class="b" style="left:495px;top:771px;width:1px;height:19px;background:#d8d8d8;"></div>
<div class="b" style="left:579px;top:771px;width:1px;height:19px;background:#d8d8d8;"></div>
<div class="b" style="left:687px;top:771px;width:1px;height:19px;background:#d8d8d8;"></div>
<div class="b" style="left:807px;top:771px;width:1px;height:19px;background:#d8d8d8;"></div>
<div class="b" style="left:927px;top:771px;width:1px;height:19px;background:#d8d8d8;"></div>
<div class="b" style="left:1047px;top:771px;width:1px;height:19px;background:#d8d8d8;"></div>
<div class="b" style="left:1167px;top:771px;width:1px;height:19px;background:#d8d8d8;"></div>
<div class="b" style="left:1287px;top:771px;width:1px;height:19px;background:#d8d8d8;"></div>
<div class="b" style="left:1407px;top:771px;width:1px;height:19px;background:#d8d8d8;"></div>
<div class="b" style="left:16px;top:790px;width:1580px;height:20px;background:#0078d7;"></div>
<svg class="b" style="left:19px;top:793px" width="15" height="15" viewBox="0 0 15 15"><path d="M.5 .5h7l3 3v10.500h-10z" fill="#fbfbfb" stroke="#8a8a8a"/><path d="M7.500 .5v3h3" fill="#e8e8e8" stroke="#8a8a8a"/><circle cx="11" cy="11.300" r="3.200" fill="#f4551f" stroke="#b83008" stroke-width=".8"/><circle cx="10.200" cy="10.300" r="1" fill="#ffb08a"/></svg>
<span class="t" style="top:790px;font-size:12.5px;color:#fff;left:38px;transform:scaleX(0.853);">1713154314</span>
<span class="t tr" style="top:790px;font-size:12.5px;color:#fff;left:270.81px;transform:scaleX(0.890);">2020.07.13 17:51:57</span>
<span class="t tr" style="top:790px;font-size:12.5px;color:#fff;left:474.74px;transform:scaleX(0.970);">sell</span>
<span class="t tr" style="top:790px;font-size:12.5px;color:#fff;left:553.17px;transform:scaleX(0.890);">1.00</span>
<span class="t tr" style="top:790px;font-size:12.5px;color:#fff;left:644.49px;transform:scaleX(0.970);">audusd</span>
<span class="t tr" style="top:790px;font-size:12.5px;color:#fff;left:760.31px;transform:scaleX(0.890);">0.69856</span>
<span class="t tr" style="top:790px;font-size:12.5px;color:#fff;left:880.31px;transform:scaleX(0.890);">0.00000</span>
<span class="t tr" style="top:790px;font-size:12.5px;color:#fff;left:1000.31px;transform:scaleX(0.890);">0.00000</span>
<span class="t tr" style="top:790px;font-size:12.5px;color:#fff;left:1120.31px;transform:scaleX(0.890);">0.69871</span>
<span class="t tr" style="top:790px;font-size:12.5px;color:#fff;left:1257.01px;transform:scaleX(0.890);">-2.51</span>
<span class="t tr" style="top:790px;font-size:12.5px;color:#fff;left:1381.17px;transform:scaleX(0.890);">0.00</span>
<span class="t tr" style="top:790px;font-size:12.5px;color:#fff;left:1537.06px;transform:scaleX(0.890);">-15.00</span>
<svg class="b" style="left:1582px;top:796px" width="8" height="8" viewBox="0 0 8 8"><path d="M1 1l5.500 5.500M6.500 1l-5.500 5.500" stroke="#b0b0b0" stroke-width="1.700"/></svg>
<div class="b" style="left:170px;top:791px;width:1px;height:19px;background:#c0d8f0;"></div>
<div class="b" style="left:387px;top:791px;width:1px;height:19px;background:#c0d8f0;"></div>
<div class="b" style="left:495px;top:791px;width:1px;height:19px;background:#c0d8f0;"></div>
<div class="b" style="left:579px;top:791px;width:1px;height:19px;background:#c0d8f0;"></div>
<div class="b" style="left:687px;top:791px;width:1px;height:19px;background:#c0d8f0;"></div>
<div class="b" style="left:807px;top:791px;width:1px;height:19px;background:#c0d8f0;"></div>
<div class="b" style="left:927px;top:791px;width:1px;height:19px;background:#c0d8f0;"></div>
<div class="b" style="left:1047px;top:791px;width:1px;height:19px;background:#c0d8f0;"></div>
<div class="b" style="left:1167px;top:791px;width:1px;height:19px;background:#c0d8f0;"></div>
<div class="b" style="left:1287px;top:791px;width:1px;height:19px;background:#c0d8f0;"></div>
<div class="b" style="left:1407px;top:791px;width:1px;height:19px;background:#c0d8f0;"></div>
<div class="b" style="left:16px;top:810px;width:1580px;height:20px;background:#c8c8c8;"></div>
<svg class="b" style="left:19px;top:813px" width="12" height="14" viewBox="0 0 12 14"><rect x=".5" y=".5" width="11" height="13" rx="1" fill="#fafafa" stroke="#8a8a8a"/><path d="M4.700 3h2.600v3.300h2.200l-3.500 3.700-3.500-3.700h2.200z" fill="#f04010" stroke="#b02000" stroke-width=".5"/></svg>
<span class="t" style="top:810px;font-size:12.5px;font-weight:bold;left:38px;transform:scaleX(0.941);">Balance: 10 000.00 USD  Equity: 9 947.98  Margin: 139.70  Free margin: 9 808.29  Margin level: 7121.21%</span>
<span class="t tr" style="top:810px;font-size:12.5px;font-weight:bold;left:1537.06px;transform:scaleX(1.010);">-52.02</span>
<div class="b" style="left:16px;top:851px;width:1581px;height:1px;background:#000;"></div>
<div class="b" style="left:18px;top:851px;width:49px;height:20px;background:#fff;border:1px solid #000;border-top:none;box-sizing:border-box;box-shadow:1px 1px 0 #808080;"></div>
<span class="t" style="top:851px;font-size:12.5px;left:28px;transform:scaleX(0.864);">Trade</span>
<span class="t" style="top:851px;font-size:12.5px;color:#808080;left:77px;transform:scaleX(0.915);">Exposure</span>
<span class="t" style="top:851px;font-size:12.5px;color:#808080;left:145px;transform:scaleX(0.980);">Account History</span>
<span class="t" style="top:851px;font-size:12.5px;color:#808080;left:250.5px;transform:scaleX(0.937);">News</span>
<span class="t" style="top:851px;font-size:12.5px;color:#808080;left:312px;transform:scaleX(0.933);">Alerts</span>
<span class="t" style="top:851px;font-size:12.5px;color:#808080;left:362px;transform:scaleX(0.970);">Mailbox</span>
<span class="t" style="top:851px;font-size:12.5px;color:#808080;left:432px;transform:scaleX(0.963);">Market</span>
<span class="t" style="top:851px;font-size:12.5px;color:#808080;left:505.5px;transform:scaleX(0.922);">Signals</span>
<span class="t" style="top:851px;font-size:12.5px;color:#808080;left:562.5px;transform:scaleX(0.971);">Articles</span>
<span class="t" style="top:851px;font-size:12.5px;color:#808080;left:628.5px;transform:scaleX(0.902);">Code Base</span>
<span class="t" style="top:851px;font-size:12.5px;color:#808080;left:703.5px;transform:scaleX(0.916);">Experts</span>
<span class="t" style="top:851px;font-size:12.5px;color:#808080;left:761.5px;transform:scaleX(0.946);">Journal</span>
<span class="t" style="top:856px;font-size:9px;color:#ff0000;font-weight:bold;left:281.5px;transform:scaleX(0.950);">99</span>
<span class="t" style="top:856px;font-size:9px;color:#ff0000;font-weight:bold;left:407px;transform:scaleX(0.950);">7</span>
<span class="t" style="top:856px;font-size:9px;color:#ff0000;font-weight:bold;left:470.5px;transform:scaleX(0.950);">144</span>
<span class="t" style="top:856px;font-size:9px;color:#ff0000;font-weight:bold;left:604px;transform:scaleX(0.950);">1</span>
<div class="b" style="left:135px;top:855px;width:1px;height:14px;background:#707070;"></div>
<div class="b" style="left:241px;top:855px;width:1px;height:14px;background:#707070;"></div>
<div class="b" style="left:302px;top:855px;width:1px;height:14px;background:#707070;"></div>
<div class="b" style="left:352px;top:855px;width:1px;height:14px;background:#707070;"></div>
<div class="b" style="left:422px;top:855px;width:1px;height:14px;background:#707070;"></div>
<div class="b" style="left:496px;top:855px;width:1px;height:14px;background:#707070;"></div>
<div class="b" style="left:553px;top:855px;width:1px;height:14px;background:#707070;"></div>
<div class="b" style="left:619px;top:855px;width:1px;height:14px;background:#707070;"></div>
<div class="b" style="left:695px;top:855px;width:1px;height:14px;background:#707070;"></div>
<div class="b" style="left:752px;top:855px;width:1px;height:14px;background:#707070;"></div>
<div class="b" style="left:810px;top:855px;width:1px;height:14px;background:#707070;"></div>
<div class="b" style="left:1597px;top:745px;width:1px;height:130px;background:#fff;"></div>
<div class="b" style="left:0px;top:873px;width:1600px;height:1px;background:#fff;"></div>
</section>
<section id="statusbar">
<div class="b" style="left:0px;top:876px;width:1600px;height:1px;background:#a0a0a0;"></div>
<div class="b" style="left:0px;top:877px;width:1600px;height:1px;background:#fff;"></div>
<div class="b" style="left:0px;top:878px;width:1600px;height:20px;background:#f0f0f0;"></div>
<div class="b" style="left:0px;top:898px;width:1600px;height:2px;background:#3c3c3c;"></div>
<span class="t" style="top:880px;font-size:12.5px;left:2px;transform:scaleX(0.892);">For Help, press F1</span>
<div class="b" style="left:906px;top:881px;width:1px;height:17px;background:#8c8c8c;"></div>
<div class="b" style="left:907px;top:881px;width:1px;height:17px;background:#fff;"></div>
<div class="b" style="left:1022px;top:881px;width:1px;height:17px;background:#8c8c8c;"></div>
<div class="b" style="left:1023px;top:881px;width:1px;height:17px;background:#fff;"></div>
<div class="b" style="left:1124px;top:881px;width:1px;height:17px;background:#8c8c8c;"></div>
<div class="b" style="left:1125px;top:881px;width:1px;height:17px;background:#fff;"></div>
<div class="b" style="left:1195px;top:881px;width:1px;height:17px;background:#8c8c8c;"></div>
<div class="b" style="left:1196px;top:881px;width:1px;height:17px;background:#fff;"></div>
<div class="b" style="left:1266px;top:881px;width:1px;height:17px;background:#8c8c8c;"></div>
<div class="b" style="left:1267px;top:881px;width:1px;height:17px;background:#fff;"></div>
<div class="b" style="left:1334px;top:881px;width:1px;height:17px;background:#8c8c8c;"></div>
<div class="b" style="left:1335px;top:881px;width:1px;height:17px;background:#fff;"></div>
<div class="b" style="left:1404px;top:881px;width:1px;height:17px;background:#8c8c8c;"></div>
<div class="b" style="left:1405px;top:881px;width:1px;height:17px;background:#fff;"></div>
<div class="b" style="left:1470px;top:881px;width:1px;height:17px;background:#8c8c8c;"></div>
<div class="b" style="left:1471px;top:881px;width:1px;height:17px;background:#fff;"></div>
<span class="t" style="top:880px;font-size:12.5px;left:912px;transform:scaleX(0.967);">Default</span>
<span class="t" style="top:880px;font-size:12.5px;left:1027.5px;transform:scaleX(0.871);">2020.07.09 22:00</span>
<span class="t" style="top:880px;font-size:12.5px;left:1130px;transform:scaleX(0.878);">O: 0.69650</span>
<span class="t" style="top:880px;font-size:12.5px;left:1201px;transform:scaleX(0.888);">H: 0.69685</span>
<span class="t" style="top:880px;font-size:12.5px;left:1271.5px;transform:scaleX(0.877);">L: 0.69558</span>
<span class="t" style="top:880px;font-size:12.5px;left:1339.5px;transform:scaleX(0.880);">C: 0.69607</span>
<span class="t" style="top:880px;font-size:12.5px;left:1409.5px;transform:scaleX(0.887);">V: 3285</span>
<span class="t" style="top:880px;font-size:12.5px;left:1503px;transform:scaleX(0.934);">5465/8 kb</span>
<svg class="b" style="left:1476px;top:883px" width="24" height="12" viewBox="0 0 24 12"><rect x="0" y="0" width="2" height="10" fill="#2a9a2a"/><rect x="0" y="10" width="2" height="2" fill="#1a4fa0"/><rect x="3" y="0" width="2" height="9" fill="#2a9a2a"/><rect x="3" y="9" width="2" height="3" fill="#1a4fa0"/><rect x="6" y="0" width="2" height="8" fill="#2a9a2a"/><rect x="6" y="8" width="2" height="4" fill="#1a4fa0"/><rect x="9" y="0" width="2" height="7" fill="#2a9a2a"/><rect x="9" y="7" width="2" height="5" fill="#1a4fa0"/><rect x="12" y="0" width="2" height="6" fill="#2a9a2a"/><rect x="12" y="6" width="2" height="6" fill="#1a4fa0"/><rect x="15" y="0" width="2" height="5" fill="#2a9a2a"/><rect x="15" y="5" width="2" height="7" fill="#1a4fa0"/><rect x="18" y="0" width="2" height="4" fill="#2a9a2a"/><rect x="18" y="4" width="2" height="8" fill="#1a4fa0"/><rect x="21" y="0" width="2" height="3" fill="#2a9a2a"/><rect x="21" y="3" width="2" height="9" fill="#1a4fa0"/></svg>
</section>
<section id="order-dialog">
<div class="b" style="left:498px;top:194px;width:753px;height:379px;background:#f0f0f0;box-shadow:0 0 0 1px #161616;"></div>
<div class="b" style="left:498px;top:194px;width:753px;height:30px;background:#fff;"></div>
<span class="t" style="top:199px;font-size:12.5px;left:506px;transform:scaleX(0.885);">Order #1713154314 sell 1.00 AUDUSD at 0.69856 sl: 0.00000 tp: 0.00000</span>
<div class="b" style="left:1132px;top:208px;width:11px;height:1px;background:#000;"></div>
<div class="b" style="left:1177px;top:204px;width:10px;height:10px;border:1px solid #cfcfcf;box-sizing:border-box;"></div>
<svg class="b" style="left:1222px;top:203px" width="11" height="11" viewBox="0 0 11 11"><path d="M.5 .5l10 10M10.500 .5l-10 10" fill="none" stroke="#000" stroke-width="1.200"/></svg>
<div class="b" style="left:506px;top:237px;width:299px;height:326px;background:#fff;border:2px solid #696969;border-right:1px solid #fff;border-bottom:1px solid #fff;box-sizing:border-box;box-shadow:0 0 0 0 #000;"></div>
<svg class="b" style="left:508px;top:239px" width="296" height="323" viewBox="508 239 296 323" shape-rendering="crispEdges">
<path d="M543.5 242V560" stroke="#c0c0c0" stroke-dasharray="3 3" fill="none"/>
<path d="M575.5 242V560" stroke="#c0c0c0" stroke-dasharray="3 3" fill="none"/>
<path d="M607.5 242V560" stroke="#c0c0c0" stroke-dasharray="3 3" fill="none"/>
<path d="M639.5 242V560" stroke="#c0c0c0" stroke-dasharray="3 3" fill="none"/>
<path d="M671.5 242V560" stroke="#c0c0c0" stroke-dasharray="3 3" fill="none"/>
<path d="M703.5 242V560" stroke="#c0c0c0" stroke-dasharray="3 3" fill="none"/>
<path d="M735.5 242V560" stroke="#c0c0c0" stroke-dasharray="3 3" fill="none"/>
<path d="M511 271.5H760" stroke="#c0c0c0" stroke-dasharray="3 3" fill="none"/>
<path d="M511 303.5H760" stroke="#c0c0c0" stroke-dasharray="3 3" fill="none"/>
<path d="M511 335.5H760" stroke="#c0c0c0" stroke-dasharray="3 3" fill="none"/>
<path d="M511 367.5H760" stroke="#c0c0c0" stroke-dasharray="3 3" fill="none"/>
<path d="M511 399.5H760" stroke="#c0c0c0" stroke-dasharray="3 3" fill="none"/>
<path d="M511 431.5H760" stroke="#c0c0c0" stroke-dasharray="3 3" fill="none"/>
<path d="M511 463.5H760" stroke="#c0c0c0" stroke-dasharray="3 3" fill="none"/>
<path d="M511 495.5H760" stroke="#c0c0c0" stroke-dasharray="3 3" fill="none"/>
<path d="M511 527.5H760" stroke="#c0c0c0" stroke-dasharray="3 3" fill="none"/>
<path d="M511 559.5H760" stroke="#c0c0c0" stroke-dasharray="3 3" fill="none"/>
<rect x="510.500" y="241.500" width="250" height="319" fill="none" stroke="#000"/>
<rect x="761" y="271" width="2" height="1" fill="#000"/>
<rect x="761" y="303" width="2" height="1" fill="#000"/>
<rect x="761" y="335" width="2" height="1" fill="#000"/>
<rect x="761" y="367" width="2" height="1" fill="#000"/>
<rect x="761" y="399" width="2" height="1" fill="#000"/>
<rect x="761" y="431" width="2" height="1" fill="#000"/>
<rect x="761" y="463" width="2" height="1" fill="#000"/>
<rect x="761" y="495" width="2" height="1" fill="#000"/>
<rect x="761" y="527" width="2" height="1" fill="#000"/>
<rect x="761" y="559" width="2" height="1" fill="#000"/>
<path d="M511 369.5L512.67 369.5L513.5 380.33L514.33 402L514.67 412L514.33 412L516.33 412.33L516.33 422.83L517.33 412.33L521.83 412.33L521.83 438.67L522.67 465.33L523.5 422L524.33 438.67L525.17 465.33L526 438.67L526.83 412L527.67 407L528.5 401.67L532.33 401.67L532.67 392L532.67 390.33L533.5 380.33L534.33 386.17L535.17 395.33L535.67 400.33L536.33 386.17L537.67 370.33L538.5 358.67L539 377L540.17 368.67L541 363.67L541.83 343.67L542.67 317L543.5 295.33L544.67 283.67L545.67 273.33L546.33 273.67L547 285.33L547.67 295.33L548.5 307L549.67 316.17L550.17 302L551 300.33L551.83 290.33L552.33 284.5L553 295.33L553.5 327L554.33 305.33L555.17 325.33L556 337L556.83 337.83L557.67 357.83L558.5 348.67L559.33 333.67L560.17 317L561.33 305.33L562.33 317L563 342L563.83 363.67L564.33 368.67L565.17 362L566 358.67L566.83 363.67L567.33 368.67L568 348.67L568.67 323.67L569.33 316.17L570.17 323.67L571 348.67L571.83 368.67L572.33 327.83L573.17 343.67L574 362L574.67 370.33L575.33 380.33L576 370.33L576.67 378.67L577.33 369.5L578.33 370.33L579 380.33L760 380.5" stroke="#ff6060" stroke-width="1" fill="none"/>
<path d="M511 444.5L511.83 442L512.33 432.83L513 445.33L513.5 459.5L514.67 470.33L515.67 485.33L516.33 497.83L517 475.33L518 486.17L519 475.33L520.17 486.17L521 475.33L521.83 502L522.33 529.5L523.17 502L524 486.17L524.67 497L525.33 518.67L526 497L526.83 470.33L527.67 465.33L529.33 470.33L529.67 475.33L530.5 465.33L531.33 475.33L532 465.33L535.67 465.33L536 455.33L536.83 444.5L537.67 428.67L538.5 412L539.33 428.67L540.17 433.67L541 422.83L541.83 402L541.83 400.33L542.33 370.33L543 358.67L544.33 357.83L545.67 348.67L548 348.67L549 357.83L551.83 358.33L552.67 370.33L553.5 380.33L554.33 369.5L554.67 391.17L555.33 402L556 390.33L556.83 402L557.33 417L558.5 422.83L559.33 407L560.17 397L560.67 400.33L561.33 390.33L562.33 390.33L563 407L563.5 432.83L564.33 444.5L565.17 444.5L566 433.67L566.83 432.83L567.67 412L568.5 397L568.83 390.33L569.67 391.17L570.67 400.33L571.83 407L572.67 412L573.5 407L574.33 422.83L574.67 438.67L575.67 444.5L576.83 444.5L577.33 439.5L578.33 432.83L579 444.5L760 444.5" stroke="#1a6cf0" stroke-width="1" fill="none"/>
<rect x="511" y="539" width="249" height="1" fill="#3030c0"/>
<rect x="762" y="375" width="41" height="11" fill="#ff6b6b"/>
<rect x="762" y="439" width="41" height="11" fill="#0d5cf0"/>
<rect x="762" y="534" width="41" height="11" fill="#3333cc"/>
</svg>
<span class="t" style="top:239px;font-size:10px;left:513px;transform:scaleX(0.978);">AUDUSD</span>
<span class="t" style="top:262px;font-size:10px;left:766px;transform:scaleX(0.907);">0.69881</span>
<span class="t" style="top:294px;font-size:10px;left:766px;transform:scaleX(0.907);">0.69878</span>
<span class="t" style="top:326px;font-size:10px;left:766px;transform:scaleX(0.907);">0.69875</span>
<span class="t" style="top:358px;font-size:10px;left:766px;transform:scaleX(0.907);">0.69872</span>
<span class="t" style="top:390px;font-size:10px;left:766px;transform:scaleX(0.907);">0.69869</span>
<span class="t" style="top:422px;font-size:10px;left:766px;transform:scaleX(0.907);">0.69866</span>
<span class="t" style="top:454px;font-size:10px;left:766px;transform:scaleX(0.907);">0.69863</span>
<span class="t" style="top:486px;font-size:10px;left:766px;transform:scaleX(0.907);">0.69860</span>
<span class="t" style="top:518px;font-size:10px;left:766px;transform:scaleX(0.907);">0.69857</span>
<span class="t" style="top:547px;font-size:10px;left:766px;transform:scaleX(0.907);">0.69854</span>
<span class="t" style="top:371px;font-size:10px;color:#fff;left:766px;transform:scaleX(0.907);">0.69871</span>
<span class="t" style="top:435px;font-size:10px;color:#fff;left:766px;transform:scaleX(0.907);">0.69865</span>
<span class="t" style="top:530px;font-size:10px;color:#fff;left:766px;transform:scaleX(0.907);">0.69856</span>
<span class="t" style="top:525px;font-size:10px;color:#222;left:511.5px;transform:scaleX(0.977);">Entry</span>
<span class="t" style="top:525px;font-size:10px;color:#333;left:511.5px;transform:scaleX(0.885);">EP</span>
<span class="t tr" style="top:237px;font-size:11px;left:862.76px;transform:scaleX(0.951);">Symbol:</span>
<span class="t tr" style="top:263px;font-size:11px;left:862.75px;transform:scaleX(0.938);">Volume:</span>
<span class="t tr" style="top:289px;font-size:11px;left:850.52px;transform:scaleX(0.958);">Stop Loss:</span>
<span class="t tr" style="top:315px;font-size:11px;left:851.76px;transform:scaleX(0.962);">Comment:</span>
<span class="t tr" style="top:341px;font-size:11px;left:875.6px;transform:scaleX(1.052);">Type:</span>
<span class="t" style="top:289px;font-size:11px;left:1063.5px;transform:scaleX(1.023);">Take Profit:</span>
<div class="b" style="left:911px;top:237px;width:323px;height:21px;background:#cccccc;border:1px solid #bfbfbf;box-sizing:border-box;"></div>
<span class="t" style="top:238px;font-size:11px;color:#6d6d6d;left:914.5px;transform:scaleX(0.944);">AUDUSD, Australian Dollar vs US Dollar</span>
<svg class="b" style="left:1220px;top:245px" width="10" height="6" viewBox="0 0 10 6"><path d="M.5 .5l4.500 4.500 4.500-4.500" fill="none" stroke="#b4b4b4" stroke-width="1.200"/></svg>
<div class="b" style="left:911px;top:263px;width:105px;height:21px;background:#fff;border:1px solid #adadad;box-sizing:border-box;"></div>
<div class="b" style="left:914px;top:266px;width:82px;height:15px;background:#e6e6e6;"></div>
<span class="t" style="top:264px;font-size:11px;color:#6d6d6d;left:917.5px;transform:scaleX(0.972);">1.00</span>
<svg class="b" style="left:1002px;top:271px" width="10" height="6" viewBox="0 0 10 6"><path d="M.5 .5l4.500 4.500 4.500-4.500" fill="none" stroke="#a0a0a0" stroke-width="1.200"/></svg>
<div class="b" style="left:911px;top:289px;width:105px;height:20px;background:#f0f0f0;border:1px solid #bdbdbd;box-shadow:inset 0 0 0 1px #fafafa;box-sizing:border-box;"></div>
<div class="b" style="left:998px;top:290px;width:17px;height:18px;background:#ececec;border-left:1px solid #d8d8d8;box-sizing:border-box;"></div>
<div class="b" style="left:999px;top:299px;width:16px;height:1px;background:#d0d0d0;"></div>
<svg class="b" style="left:1003px;top:294px" width="7" height="4" viewBox="0 0 7 4"><path d="M0 3.500h7L3.500 0z" fill="#555"/></svg>
<svg class="b" style="left:1003px;top:301px" width="7" height="4" viewBox="0 0 7 4"><path d="M0 0h7L3.500 3.500z" fill="#555"/></svg>
<span class="t tr" style="top:289px;font-size:11px;color:#6d6d6d;left:954.24px;transform:scaleX(1.013);">0.00000</span>
<div class="b" style="left:1128px;top:289px;width:105px;height:20px;background:#f0f0f0;border:1px solid #bdbdbd;box-shadow:inset 0 0 0 1px #fafafa;box-sizing:border-box;"></div>
<div class="b" style="left:1215px;top:290px;width:17px;height:18px;background:#ececec;border-left:1px solid #d8d8d8;box-sizing:border-box;"></div>
<div class="b" style="left:1216px;top:299px;width:16px;height:1px;background:#d0d0d0;"></div>
<svg class="b" style="left:1220px;top:294px" width="7" height="4" viewBox="0 0 7 4"><path d="M0 3.500h7L3.500 0z" fill="#555"/></svg>
<svg class="b" style="left:1220px;top:301px" width="7" height="4" viewBox="0 0 7 4"><path d="M0 0h7L3.500 3.500z" fill="#555"/></svg>
<span class="t tr" style="top:289px;font-size:11px;color:#6d6d6d;left:1171.24px;transform:scaleX(1.013);">0.00000</span>
<div class="b" style="left:911px;top:315px;width:323px;height:19px;background:#f3f3f3;border:1px solid #cdcdcd;box-shadow:inset 0 0 0 1px #fafafa;box-sizing:border-box;"></div>
<div class="b" style="left:911px;top:341px;width:323px;height:21px;background:#e1e1e1;border:1px solid #adadad;box-sizing:border-box;"></div>
<span class="t" style="top:342px;font-size:11px;left:914.5px;transform:scaleX(0.988);">Modify Order</span>
<svg class="b" style="left:1220px;top:349px" width="10" height="6" viewBox="0 0 10 6"><path d="M.5 .5l4.500 4.500 4.500-4.500" fill="none" stroke="#222" stroke-width="1.200"/></svg>
<div class="b" style="left:864px;top:336px;width:375px;height:32px;border:3px solid #ed1c24;box-sizing:border-box;"></div>
<div class="b" style="left:813px;top:376px;width:428px;height:188px;border:1px solid #dcdcdc;box-sizing:border-box;"></div>
<div class="b" style="left:819px;top:371px;width:68px;height:12px;background:#f0f0f0;"></div>
<span class="t" style="top:367px;font-size:11px;left:821px;transform:scaleX(0.988);">Modify Order</span>
<div class="b" style="left:810px;top:368px;width:429px;height:171px;border:3px solid #ff7f27;box-sizing:border-box;"></div>
<span class="t tr" style="top:395px;font-size:11px;left:873.65px;transform:scaleX(0.981);">Level:</span>
<span class="t" style="top:395px;font-size:11px;left:1067.5px;">Level:</span>
<div class="b" style="left:911px;top:394px;width:53px;height:21px;background:#fff;border:1px solid #7a7a84;box-sizing:border-box;"></div>
<span class="t" style="top:395px;font-size:11px;left:916.5px;transform:scaleX(0.964);">20</span>
<svg class="b" style="left:951px;top:403px" width="10" height="6" viewBox="0 0 10 6"><path d="M.5 .5l4.500 4.500 4.500-4.500" fill="none" stroke="#444" stroke-width="1.200"/></svg>
<div class="b" style="left:1106px;top:394px;width:53px;height:21px;background:#fff;border:1px solid #7a7a84;box-sizing:border-box;"></div>
<span class="t" style="top:395px;font-size:11px;left:1111.5px;transform:scaleX(0.964);">20</span>
<svg class="b" style="left:1146px;top:403px" width="10" height="6" viewBox="0 0 10 6"><path d="M.5 .5l4.500 4.500 4.500-4.500" fill="none" stroke="#444" stroke-width="1.200"/></svg>
<span class="t" style="top:395px;font-size:11px;left:970px;">points</span>
<span class="t" style="top:395px;font-size:11px;left:1172px;">points</span>
<span class="t tr" style="top:426px;font-size:11px;left:859.59px;transform:scaleX(0.974);">Copy as:</span>
<span class="t" style="top:426px;font-size:11px;left:1054px;transform:scaleX(0.986);">Copy as:</span>
<div class="b" style="left:912px;top:425px;width:81px;height:21px;background:#e5e5e5;border:1px solid #adadad;box-sizing:border-box;"></div>
<div class="b" style="left:914px;top:427px;width:77px;height:17px;background:#ff8080;border-radius:2px;"></div>
<span class="t" style="top:426px;font-size:11px;left:931.5px;transform:scaleX(1.013);">0.69891</span>
<div class="b" style="left:1107px;top:425px;width:81px;height:21px;background:#99c4fb;border:2px solid #0078d7;box-sizing:border-box;"></div>
<div class="b" style="left:1109px;top:427px;width:77px;height:17px;border:1px dotted #000;box-sizing:border-box;"></div>
<span class="t" style="top:426px;font-size:11px;left:1126px;transform:scaleX(1.013);">0.69851</span>
<span class="t tr" style="top:456px;font-size:11px;left:851.02px;transform:scaleX(0.958);">Stop Loss:</span>
<span class="t" style="top:456px;font-size:11px;left:1041px;transform:scaleX(1.014);">Take Profit:</span>
<div class="b" style="left:911px;top:456px;width:83px;height:20px;background:#fff;border:1px solid #7a7a84;border-right-color:#adadad;box-sizing:border-box;"></div>
<div class="b" style="left:976px;top:457px;width:17px;height:18px;background:#f0f0f0;border:1px solid #d0d0d0;box-sizing:border-box;"></div>
<div class="b" style="left:977px;top:465px;width:15px;height:1px;background:#c0c0c0;"></div>
<svg class="b" style="left:981px;top:460px" width="7" height="4" viewBox="0 0 7 4"><path d="M0 3.500h7L3.500 0z" fill="#111"/></svg>
<svg class="b" style="left:981px;top:468px" width="7" height="4" viewBox="0 0 7 4"><path d="M0 0h7L3.500 3.500z" fill="#111"/></svg>
<span class="t tr" style="top:456px;font-size:11px;left:932.74px;transform:scaleX(1.013);">0.69892</span>
<div class="b" style="left:1106px;top:456px;width:83px;height:20px;background:#fff;border:1px solid #7a7a84;border-right-color:#adadad;box-sizing:border-box;"></div>
<div class="b" style="left:1171px;top:457px;width:17px;height:18px;background:#f0f0f0;border:1px solid #d0d0d0;box-sizing:border-box;"></div>
<div class="b" style="left:1172px;top:465px;width:15px;height:1px;background:#c0c0c0;"></div>
<svg class="b" style="left:1176px;top:460px" width="7" height="4" viewBox="0 0 7 4"><path d="M0 3.500h7L3.500 0z" fill="#111"/></svg>
<svg class="b" style="left:1176px;top:468px" width="7" height="4" viewBox="0 0 7 4"><path d="M0 0h7L3.500 3.500z" fill="#111"/></svg>
<span class="t tr" style="top:456px;font-size:11px;left:1127.74px;transform:scaleX(1.013);">0.69856</span>
<div class="b" style="left:829px;top:485px;width:396px;height:21px;background:#e5e5e5;border:1px solid #adadad;box-sizing:border-box;"></div>
<div class="b" style="left:831px;top:487px;width:392px;height:17px;background:#ff8080;border-radius:2px;"></div>
<span class="t" style="top:486px;font-size:11px;left:872px;transform:scaleX(0.991);">Modify #1713154314 sell 1.00 AUDUSD sl: 0.69892 tp: 0.69856</span>
<span class="t" style="top:513px;font-size:11px;left:829px;transform:scaleX(0.995);">Stop Loss or Take Profit you set must differ from market price by at least 0 points.</span>
</section>
</body>
</html>
